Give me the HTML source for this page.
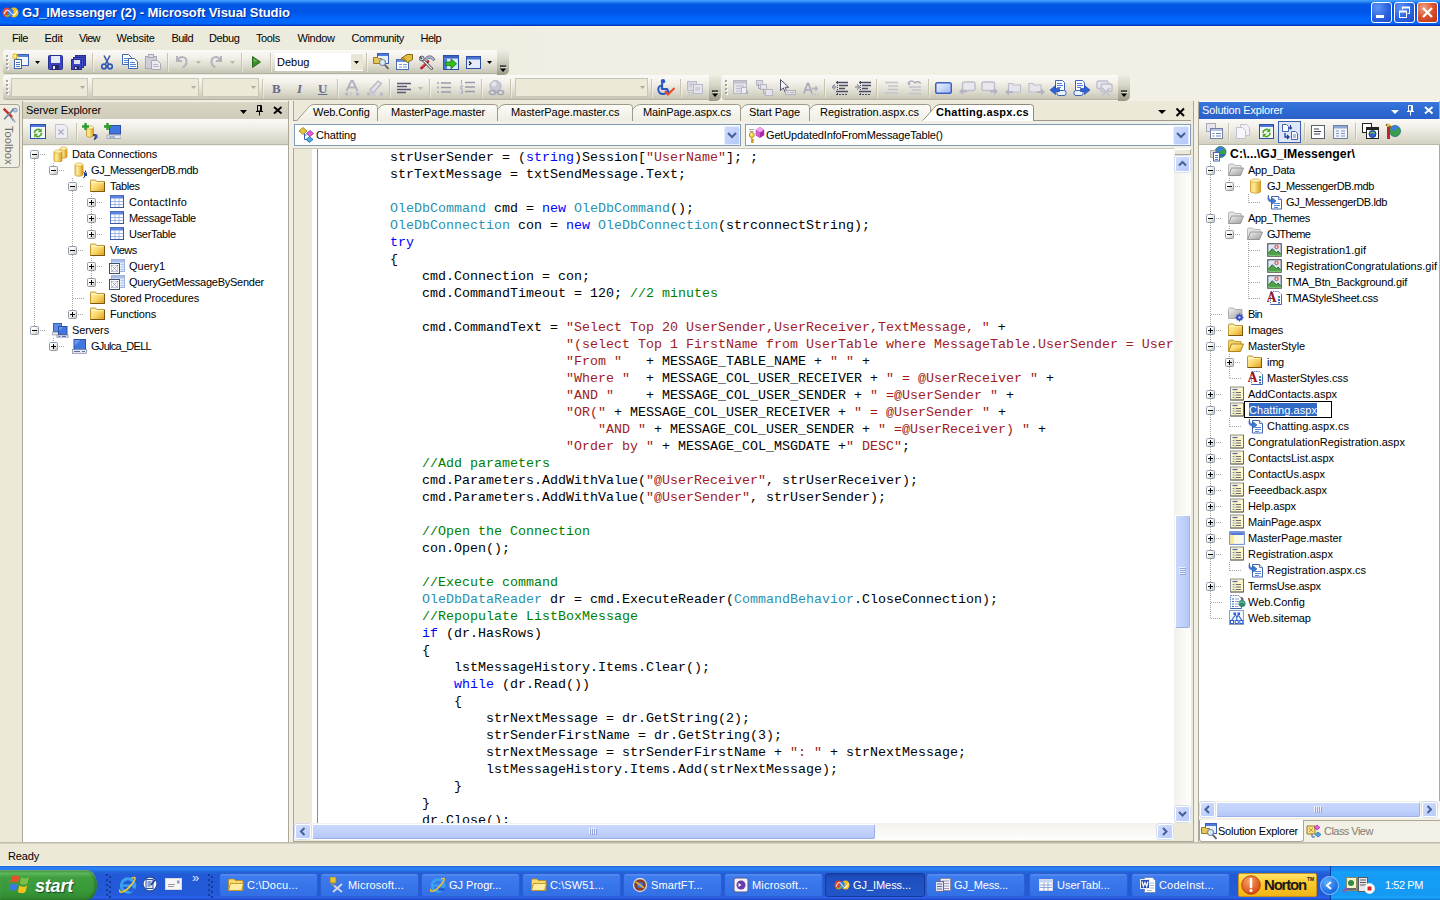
<!DOCTYPE html><html><head><meta charset="utf-8"><title>GJ_IMessenger (2) - Microsoft Visual Studio</title><style>

*{box-sizing:border-box;margin:0;padding:0}
html,body{width:1440px;height:900px;overflow:hidden;background:#ece9d8;font-family:"Liberation Sans",sans-serif;font-size:11px;color:#000}
div,span,svg,i,b{position:absolute;display:block}
.t{white-space:pre;line-height:13px;height:13px}
i,b{font-style:normal;font-weight:normal}
.c{white-space:pre;font-family:"Liberation Mono",monospace;font-size:13.333px;line-height:17px;height:17px}

</style></head><body>
<svg width="0" height="0" style="left:0;top:0"><defs><linearGradient id="tg" x1="0" y1="0" x2="0" y2="1"><stop offset="0" stop-color="#fcfcf8"/><stop offset="1" stop-color="#efede2"/></linearGradient><linearGradient id="cy" x1="0" x2="1"><stop offset="0" stop-color="#f7d66a"/><stop offset=".35" stop-color="#fbe99a"/><stop offset="1" stop-color="#d99b12"/></linearGradient><linearGradient id="fo" x1="0" y1="0" x2="1" y2="1"><stop offset="0" stop-color="#fef4bc"/><stop offset=".5" stop-color="#f8d96c"/><stop offset="1" stop-color="#e29a18"/></linearGradient><linearGradient id="gf" x1="0" y1="0" x2="1" y2="1"><stop offset="0" stop-color="#f4f4f4"/><stop offset="1" stop-color="#9c9c9c"/></linearGradient></defs></svg>
<div id="title" style="left:0;top:0;width:1440px;height:26px;background:linear-gradient(to bottom,#3f9fff 0%,#3a98fc 4%,#1c74ec 10%,#075ae4 16%,#0054e6 24%,#0054e6 46%,#005af0 56%,#0064fa 68%,#0067ff 88%,#0060f4 93%,#0038b8 97%,#002fae 100%)"><svg style="left:2px;top:6px" width="17" height="13" viewBox="0 0 17 13"><ellipse cx="5" cy="6.500" rx="4.500" ry="5" fill="#e8402a"/><ellipse cx="12" cy="6.500" rx="4.500" ry="5" fill="#f5c21a"/><ellipse cx="8.500" cy="6.500" rx="3" ry="4" fill="#3a7be0"/><path d="M2 8c2-5 4-5 6.500-1.500S13 10 15 5" stroke="#fff" stroke-width="1.200" fill="none" opacity=".85"/><path d="M3 9c2 2 3.500 1 5-1" stroke="#7ac143" stroke-width="1.500" fill="none"/></svg><span class="t" style="left:22px;top:5px;font-size:13px;font-weight:bold;color:#fff;line-height:16px;height:16px;letter-spacing:-0.084px;text-shadow:1px 1px 0 #0a2a8a;">GJ_IMessenger (2) - Microsoft Visual Studio</span><div style="left:1371px;top:2px;width:21px;height:21px;border:1px solid #fff;border-radius:3px;background:radial-gradient(circle at 30% 25%,#5e95f5 0%,#2a62e0 55%,#1c4bc4 100%)"></div><div style="left:1394px;top:2px;width:21px;height:21px;border:1px solid #fff;border-radius:3px;background:radial-gradient(circle at 30% 25%,#5e95f5 0%,#2a62e0 55%,#1c4bc4 100%)"></div><div style="left:1417px;top:2px;width:21px;height:21px;border:1px solid #fff;border-radius:3px;background:radial-gradient(circle at 30% 25%,#f0a287 0%,#d9512c 50%,#b83214 100%)"></div><i style="left:1376px;top:15px;width:8px;height:3px;background:#fff"></i><svg style="left:1398px;top:6px" width="13" height="13" viewBox="0 0 13 13"><path d="M4.500 3.500v-2h7v6h-2" fill="none" stroke="#fff" stroke-width="1"/><path d="M4 1.500h8" stroke="#fff" stroke-width="2"/><rect x="1.500" y="5.500" width="7" height="6" fill="none" stroke="#fff"/><path d="M1 5.500h8" stroke="#fff" stroke-width="2"/></svg><svg style="left:1422px;top:7px" width="11" height="11" viewBox="0 0 11 11"><path d="M1 1l9 9M10 1l-9 9" stroke="#fff" stroke-width="2.200"/></svg></div>
<div id="menu" style="left:0;top:26px;width:1440px;height:76px;background:linear-gradient(to right,#e8e6d5 0%,#efede0 25%,#f2f0e5 55%)"><i style="left:0;top:0;width:1440px;height:1px;background:#f7f6f0"></i><span class="t" style="left:12px;top:6px;letter-spacing:-0.431px;">File</span><span class="t" style="left:44.5px;top:6px;letter-spacing:-0.239px;">Edit</span><span class="t" style="left:79px;top:6px;letter-spacing:-0.711px;">View</span><span class="t" style="left:116.5px;top:6px;letter-spacing:-0.176px;">Website</span><span class="t" style="left:171.5px;top:6px;letter-spacing:-0.592px;">Build</span><span class="t" style="left:209px;top:6px;letter-spacing:-0.383px;">Debug</span><span class="t" style="left:256px;top:6px;letter-spacing:-0.380px;">Tools</span><span class="t" style="left:297.5px;top:6px;letter-spacing:-0.354px;">Window</span><span class="t" style="left:351.5px;top:6px;letter-spacing:-0.347px;">Community</span><span class="t" style="left:420.5px;top:6px;letter-spacing:-0.531px;">Help</span></div>
<div style="left:3px;top:50px;width:494px;height:24px;background:linear-gradient(to bottom,#fbfaf7 0%,#f3f1ea 30%,#dedccf 70%,#c6c4b3 100%);border-radius:3px 0 0 3px;border-bottom:1px solid #b3b19f"></div><div style="left:497px;top:50px;width:12px;height:25px;background:linear-gradient(to bottom,#efede4 0%,#d6d4c5 40%,#9b9986 100%);border-radius:0 4px 5px 0"></div><svg style="left:500px;top:65px" width="7" height="8" viewBox="0 0 8 8"><path d="M0 0h7v1.5h-7z M0 3.5h7l-3.5 4z" fill="#000"/><path d="M1 1.5h7v1h-7z" fill="#fff" opacity=".7"/></svg><i style="left:7px;top:56px;width:2px;height:2px;background:#fff"></i><i style="left:6px;top:55px;width:2px;height:2px;background:#a6a398"></i><i style="left:7px;top:60px;width:2px;height:2px;background:#fff"></i><i style="left:6px;top:59px;width:2px;height:2px;background:#a6a398"></i><i style="left:7px;top:64px;width:2px;height:2px;background:#fff"></i><i style="left:6px;top:63px;width:2px;height:2px;background:#a6a398"></i><i style="left:7px;top:68px;width:2px;height:2px;background:#fff"></i><i style="left:6px;top:67px;width:2px;height:2px;background:#a6a398"></i><svg style="left:12px;top:53px" width="17" height="16" viewBox="0 0 17 16"><rect x="4.5" y="1.5" width="12" height="11" fill="#dfe8fb" stroke="#3a5fb0"/><rect x="5" y="2" width="11" height="2" fill="#5d83d8"/><rect x="8" y="4" width="8" height="8" fill="#f4f8ff"/>
<rect x="2.500" y="6.500" width="7" height="9" fill="#fff" stroke="#3d5fa8"/><path transform="translate(0,.5)" d="M4 9h4M4 11h4M4 13h4" stroke="#4a78c8"/><path d="M3 0v6.500M0 3.200h6.500M.8 1l4.600 4.600M5.400 1L.8 5.600" stroke="#f0c010" stroke-width="1.100"/><circle cx="3" cy="3.200" r="1.300" fill="#fff6b0"/></svg><svg style="left:35px;top:61px" width="5" height="3" viewBox="0 0 5 3"><path d="M0 0h5 l-2.5 3 z" fill="#000"/></svg><svg style="left:48px;top:55px" width="15" height="15" viewBox="0 0 15 15"><rect x=".5" y=".5" width="14" height="14" rx="1" fill="#3b44c2" stroke="#27308f"/><rect x="3" y="1" width="9" height="7" fill="#e6ecf7"/><rect x="4" y="10" width="7" height="4.500" fill="#22276e"/><rect x="5" y="11" width="2" height="3" fill="#e8eaf5"/></svg><svg style="left:71px;top:55px" width="15" height="15" viewBox="0 0 15 15"><rect x="4.500" y=".5" width="10" height="10" fill="#3b44c2" stroke="#27308f"/><rect x="2.500" y="2.500" width="10" height="10" fill="#4a53c8" stroke="#27308f"/><rect x=".5" y="4.500" width="10" height="10" fill="#3b44c2" stroke="#27308f"/><rect x="3" y="5" width="6" height="4" fill="#dfe5f5"/><rect x="3" y="11" width="5" height="3.500" fill="#22276e"/><rect x="4" y="12" width="1.500" height="2" fill="#e8eaf5"/></svg><i style="left:92px;top:53px;width:1px;height:18px;background:#c6c3b1"></i><i style="left:93px;top:54px;width:1px;height:18px;background:rgba(255,255,255,.45)"></i><svg style="left:101px;top:55px" width="12" height="15" viewBox="0 0 12 15"><path d="M3 0.500L7.500 9M9 0.500L4.500 9" stroke="#3a57a6" stroke-width="1.600" fill="none"/><circle cx="3" cy="11.500" r="2.300" fill="none" stroke="#2f55b8" stroke-width="1.700"/><circle cx="9" cy="11.500" r="2.300" fill="none" stroke="#2f55b8" stroke-width="1.700"/></svg><svg style="left:122px;top:54px" width="16" height="15" viewBox="0 0 16 15"><path d="M.5.500h6l3 3v7h-9z" fill="#fff" stroke="#3f66b5"/><path transform="translate(0,.5)" d="M2 4h5M2 6h5M2 8h5" stroke="#5585d6"/><path d="M6.500 4.500h6l3 3v7h-9z" fill="#fff" stroke="#3f66b5"/><path transform="translate(0,.5)" d="M8 8h5M8 10h6M8 12h6" stroke="#5585d6"/></svg><svg style="left:145px;top:54px" width="16" height="16" viewBox="0 0 16 16"><rect x=".5" y="2.500" width="11" height="12" fill="#cfcdd6" stroke="#a9a7b4"/><rect x="3.500" y=".5" width="5" height="3" fill="#dddbe6" stroke="#a9a7b4"/><path d="M6.500 6.500h6l3 3v6h-9z" fill="#ecebf2" stroke="#a9a7b4"/><path transform="translate(0,.5)" d="M8 10h5M8 12h6" stroke="#b9b7c6"/></svg><i style="left:167px;top:53px;width:1px;height:18px;background:#c6c3b1"></i><i style="left:168px;top:54px;width:1px;height:18px;background:rgba(255,255,255,.45)"></i><svg style="left:176px;top:55px" width="12" height="13" viewBox="0 0 12 13"><path d="M1 1v5h5" fill="none" stroke="#b4b3bd" stroke-width="2"/><path d="M2 5c2-4 8-4 8.500 1c.3 3-2 5.500-4 6.500" fill="none" stroke="#b4b3bd" stroke-width="2"/></svg><svg style="left:196px;top:61px" width="5" height="3" viewBox="0 0 5 3"><path d="M0 0h5 l-2.5 3 z" fill="#b9b7a8"/></svg><svg style="left:210px;top:55px" width="12" height="13" viewBox="0 0 12 13"><path d="M11 1v5h-5" fill="none" stroke="#b4b3bd" stroke-width="2"/><path d="M10 5c-2-4-8-4-8.500 1c-.3 3 2 5.500 4 6.500" fill="none" stroke="#b4b3bd" stroke-width="2"/></svg><svg style="left:230px;top:61px" width="5" height="3" viewBox="0 0 5 3"><path d="M0 0h5 l-2.5 3 z" fill="#b9b7a8"/></svg><i style="left:241px;top:53px;width:1px;height:18px;background:#c6c3b1"></i><i style="left:242px;top:54px;width:1px;height:18px;background:rgba(255,255,255,.45)"></i><svg style="left:252px;top:56px" width="9" height="12" viewBox="0 0 9 12"><path d="M.5.500v11l8-5.500z" fill="#3b8f2b" stroke="#2a6a1d"/><path d="M1.500 2.500v3.500l4-1z" fill="#7cc46a" opacity=".7"/></svg><i style="left:270px;top:53px;width:1px;height:18px;background:#c6c3b1"></i><i style="left:271px;top:54px;width:1px;height:18px;background:rgba(255,255,255,.45)"></i><div style="left:275px;top:53px;width:88px;height:18px;background:#fff"></div><div style="left:351px;top:54px;width:12px;height:16px;background:#e9e6d6"></div><svg style="left:354px;top:61px" width="5" height="3" viewBox="0 0 5 3"><path d="M0 0h5 l-2.5 3 z" fill="#000"/></svg><span class="t" style="left:277px;top:56px;">Debug</span><i style="left:366px;top:53px;width:1px;height:18px;background:#c6c3b1"></i><i style="left:367px;top:54px;width:1px;height:18px;background:rgba(255,255,255,.45)"></i><svg style="left:373px;top:53px" width="17" height="17" viewBox="0 0 17 17"><rect x="4.500" y=".5" width="11" height="10" fill="#e9f0fc" stroke="#3a5fb0"/><rect x="5" y="1" width="10" height="2" fill="#4f79d6"/><path d="M0.500 4.500h4l1 1h3v5h-8z" fill="#e4c65a" stroke="#9a7d1e"/><circle cx="9.500" cy="9.500" r="3" fill="#d9ecf8" stroke="#7d8aa0" stroke-width="1.200"/><path d="M11.800 11.800l3.700 4" stroke="#5b5e6c" stroke-width="1.800"/></svg><svg style="left:396px;top:54px" width="17" height="16" viewBox="0 0 17 16"><rect x=".5" y="5.500" width="12" height="10" fill="#fff" stroke="#4b6cb5"/><rect x="1" y="6" width="11" height="2" fill="#6a8fe0"/><path d="M3 10.500h3M7 10.500h4M3 13h3M7 13h4" stroke="#7f96c6" stroke-width="1.200"/><path d="M5 4.500l6-4h5.500v5l-5 3z" fill="#e0bf3c" stroke="#84691a"/><path d="M6.500 3l4 4" stroke="#84691a"/></svg><svg style="left:419px;top:54px" width="17" height="16" viewBox="0 0 17 16"><path d="M6 4.500c2-3.500 7.500-4 10 1l-1.800 1.200c-1.500-2.500-4.500-3-6.500-.8z" fill="#aab2cc" stroke="#5f6784" stroke-width=".8"/><path d="M9 7.500L2.500 14" stroke="#b8202e" stroke-width="2.800" stroke-linecap="round"/><path d="M8 7.500L2.500 13" stroke="#ee8a92" stroke-width=".9"/><path d="M3 5l9.500 9.500" stroke="#3c3c44" stroke-width="2.800" stroke-linecap="round"/><path d="M3 5l9.500 9.500" stroke="#f2f2f6" stroke-width="1.200" stroke-linecap="round"/><circle cx="2.800" cy="4.500" r="2.400" fill="#d4d8e4" stroke="#4a4a55" stroke-width=".9"/><path d="M1 3l2 2" stroke="#4a4a55" stroke-width="1.200"/></svg><svg style="left:443px;top:55px" width="16" height="15" viewBox="0 0 16 15"><rect x=".5" y=".5" width="15" height="14" fill="#d8e5fb" stroke="#2c4ea3"/><rect x="1" y="1" width="14" height="2.500" fill="#3a63c4"/><rect x="1" y="3.500" width="3" height="10.500" fill="#4f7ad2"/><path d="M2.500 7h5.500v-3.200l5.500 5-5.500 5v-3.200h-5.500z" fill="#2fc21b" stroke="#14730a" stroke-width=".8"/></svg><svg style="left:466px;top:56px" width="15" height="13" viewBox="0 0 15 13"><rect x=".5" y=".5" width="14" height="12" fill="#e4ecfb" stroke="#2c4ea3"/><rect x="1" y="1" width="13" height="2.500" fill="#4a74d4"/><path d="M3 5.500l2 1.800-2 1.800" stroke="#000" stroke-width="1.200" fill="none"/></svg><svg style="left:487px;top:61px" width="5" height="3" viewBox="0 0 5 3"><path d="M0 0h5 l-2.5 3 z" fill="#000"/></svg><div style="left:3px;top:75px;width:706px;height:25px;background:linear-gradient(to bottom,#fbfaf7 0%,#f3f1ea 30%,#dedccf 70%,#c6c4b3 100%);border-radius:3px 0 0 3px;border-bottom:1px solid #b3b19f"></div><div style="left:709px;top:75px;width:12px;height:26px;background:linear-gradient(to bottom,#efede4 0%,#d6d4c5 40%,#9b9986 100%);border-radius:0 4px 5px 0"></div><svg style="left:712px;top:90px" width="7" height="8" viewBox="0 0 8 8"><path d="M0 0h7v1.5h-7z M0 3.5h7l-3.5 4z" fill="#000"/><path d="M1 1.5h7v1h-7z" fill="#fff" opacity=".7"/></svg><i style="left:7px;top:81px;width:2px;height:2px;background:#fff"></i><i style="left:6px;top:80px;width:2px;height:2px;background:#a6a398"></i><i style="left:7px;top:85px;width:2px;height:2px;background:#fff"></i><i style="left:6px;top:84px;width:2px;height:2px;background:#a6a398"></i><i style="left:7px;top:89px;width:2px;height:2px;background:#fff"></i><i style="left:6px;top:88px;width:2px;height:2px;background:#a6a398"></i><i style="left:7px;top:93px;width:2px;height:2px;background:#fff"></i><i style="left:6px;top:92px;width:2px;height:2px;background:#a6a398"></i><div style="left:11px;top:78px;width:77px;height:19px;background:#ece9d8;border:1px solid #c9c6b3"></div><svg style="left:80px;top:86px" width="5" height="3" viewBox="0 0 5 3"><path d="M0 0h5 l-2.5 3 z" fill="#b0ae9f"/></svg><div style="left:92px;top:78px;width:107px;height:19px;background:#ece9d8;border:1px solid #c9c6b3"></div><svg style="left:191px;top:86px" width="5" height="3" viewBox="0 0 5 3"><path d="M0 0h5 l-2.5 3 z" fill="#b0ae9f"/></svg><div style="left:202px;top:78px;width:57px;height:19px;background:#ece9d8;border:1px solid #c9c6b3"></div><svg style="left:251px;top:86px" width="5" height="3" viewBox="0 0 5 3"><path d="M0 0h5 l-2.5 3 z" fill="#b0ae9f"/></svg><i style="left:262px;top:79px;width:1px;height:18px;background:#c6c3b1"></i><i style="left:263px;top:80px;width:1px;height:18px;background:rgba(255,255,255,.45)"></i><span class="t" style="left:272px;top:81px;font-size:13px;font-weight:bold;color:#6a6a8c;line-height:16px;height:16px;font-family:'Liberation Serif',serif;">B</span><span class="t" style="left:297px;top:81px;font-size:13px;font-weight:bold;font-style:italic;color:#6a6a8c;line-height:16px;height:16px;font-family:'Liberation Serif',serif;">I</span><span class="t" style="left:318px;top:81px;font-size:13px;font-weight:bold;color:#6a6a8c;line-height:16px;height:16px;font-family:'Liberation Serif',serif;text-decoration:underline;">U</span><i style="left:337px;top:79px;width:1px;height:18px;background:#c6c3b1"></i><i style="left:338px;top:80px;width:1px;height:18px;background:rgba(255,255,255,.45)"></i><svg style="left:344px;top:80px" width="16" height="16" viewBox="0 0 16 16"><path d="M2.500 11L7.500 0.500h1L13.500 11M5 7.500h6" stroke="#b3b2c0" stroke-width="2" fill="none"/><rect x="1" y="12.500" width="3" height="3" fill="#b9b8c6"/><rect x="5" y="12.500" width="3" height="3" fill="#c9c8d4"/><rect x="9" y="12.500" width="2" height="3" fill="#d6d5de"/><rect x="12" y="12.500" width="3" height="3" fill="#b9b8c6"/></svg><svg style="left:367px;top:80px" width="16" height="16" viewBox="0 0 16 16"><path d="M3 10L11 1l3.500 2.500L6.500 12.500z" fill="#e3e2ea" stroke="#b7b6c4" stroke-width="1.200"/><path d="M3 10l-1 3 4-.5z" fill="#c9c8d4"/><rect x="0" y="12.500" width="3" height="3" fill="#b9b8c6"/><rect x="4" y="12.500" width="4" height="3" fill="#c9c8d4"/><rect x="9" y="12.500" width="2" height="3" fill="#dad9e2"/><rect x="13" y="12.500" width="3" height="3" fill="#b9b8c6"/></svg><i style="left:389px;top:79px;width:1px;height:18px;background:#c6c3b1"></i><i style="left:390px;top:80px;width:1px;height:18px;background:rgba(255,255,255,.45)"></i><svg style="left:397px;top:82px" width="15" height="12" viewBox="0 0 15 12"><path transform="translate(0,.5)" d="M0 1h14M0 4h10M0 7h14M0 10h9" stroke="#5a5a78" stroke-width="1.300"/></svg><svg style="left:418px;top:87px" width="5" height="3" viewBox="0 0 5 3"><path d="M0 0h5 l-2.5 3 z" fill="#b9b7a8"/></svg><i style="left:429px;top:79px;width:1px;height:18px;background:#c6c3b1"></i><i style="left:430px;top:80px;width:1px;height:18px;background:rgba(255,255,255,.45)"></i><svg style="left:437px;top:81px" width="14" height="13" viewBox="0 0 14 13"><path d="M4 2h10M4 6.500h10M4 11h10" stroke="#9a99a8" stroke-width="1.300"/><rect x="0" y="1" width="2" height="2" fill="#b5b4c2"/><rect x="0" y="5.500" width="2" height="2" fill="#b5b4c2"/><rect x="0" y="10" width="2" height="2" fill="#b5b4c2"/></svg><svg style="left:460px;top:80px" width="15" height="14" viewBox="0 0 15 14"><path d="M5 2.500h10M5 7h10M5 11.500h10" stroke="#9a99a8" stroke-width="1.300"/><path d="M1.500 0v4M.5 5.500h2v1.500h-2v1.500h2M.5 10h2v4h-2M.5 12h2" stroke="#b0afc0" stroke-width="1" fill="none"/></svg><i style="left:481px;top:79px;width:1px;height:18px;background:#c6c3b1"></i><i style="left:482px;top:80px;width:1px;height:18px;background:rgba(255,255,255,.45)"></i><svg style="left:488px;top:80px" width="17" height="16" viewBox="0 0 17 16"><circle cx="7.500" cy="6" r="5.500" fill="#c9c9d6" stroke="#b3b3c2"/><circle cx="6" cy="4" r="2.500" fill="#e4e4ec"/><rect x="1.500" y="10.500" width="6" height="4" rx="2" fill="none" stroke="#a9a8ba" stroke-width="1.600"/><rect x="9.500" y="10.500" width="6" height="4" rx="2" fill="none" stroke="#a9a8ba" stroke-width="1.600"/><path d="M6 12.500h5" stroke="#a9a8ba" stroke-width="1.600"/></svg><i style="left:510px;top:79px;width:1px;height:18px;background:#c6c3b1"></i><i style="left:511px;top:80px;width:1px;height:18px;background:rgba(255,255,255,.45)"></i><div style="left:515px;top:78px;width:133px;height:19px;background:#ece9d8;border:1px solid #c9c6b3"></div><svg style="left:640px;top:86px" width="5" height="3" viewBox="0 0 5 3"><path d="M0 0h5 l-2.5 3 z" fill="#b0ae9f"/></svg><i style="left:651px;top:79px;width:1px;height:18px;background:#c6c3b1"></i><i style="left:652px;top:80px;width:1px;height:18px;background:rgba(255,255,255,.45)"></i><svg style="left:657px;top:79px" width="18" height="17" viewBox="0 0 18 17"><circle cx="6" cy="2.300" r="2.200" fill="#2a55c7"/><path d="M5 5v5h5l2 4" stroke="#2a55c7" stroke-width="2.200" fill="none" stroke-linecap="round" stroke-linejoin="round"/><path d="M4 6.500c-4.500 2-3 8.500 2 8.500c2.500 0 4-1.500 4.500-3" stroke="#2a55c7" stroke-width="1.900" fill="none"/><path d="M8 12l3 3.500L17.500 9" stroke="#ea4a22" stroke-width="2" fill="none"/></svg><i style="left:680px;top:79px;width:1px;height:18px;background:#c6c3b1"></i><i style="left:681px;top:80px;width:1px;height:18px;background:rgba(255,255,255,.45)"></i><svg style="left:687px;top:80px" width="16" height="16" viewBox="0 0 16 16"><rect x=".5" y="1.500" width="9" height="9" fill="#dcdbe4" stroke="#bbbac8"/><rect x="6.500" y="4.500" width="9" height="9" fill="#e6e5ec" stroke="#bbbac8"/><path d="M2 4h5M2 6h3M1 12.500h2M4 12.500h2M1 15h2M4 15h2M8 8h5M8 10h5" stroke="#bdbccb" stroke-width="1.200"/></svg><div style="left:722px;top:75px;width:396px;height:25px;background:linear-gradient(to bottom,#fbfaf7 0%,#f3f1ea 30%,#dedccf 70%,#c6c4b3 100%);border-radius:3px 0 0 3px;border-bottom:1px solid #b3b19f"></div><div style="left:1118px;top:75px;width:12px;height:26px;background:linear-gradient(to bottom,#efede4 0%,#d6d4c5 40%,#9b9986 100%);border-radius:0 4px 5px 0"></div><svg style="left:1121px;top:90px" width="7" height="8" viewBox="0 0 8 8"><path d="M0 0h7v1.5h-7z M0 3.5h7l-3.5 4z" fill="#000"/><path d="M1 1.5h7v1h-7z" fill="#fff" opacity=".7"/></svg><i style="left:726px;top:81px;width:2px;height:2px;background:#fff"></i><i style="left:725px;top:80px;width:2px;height:2px;background:#a6a398"></i><i style="left:726px;top:85px;width:2px;height:2px;background:#fff"></i><i style="left:725px;top:84px;width:2px;height:2px;background:#a6a398"></i><i style="left:726px;top:89px;width:2px;height:2px;background:#fff"></i><i style="left:725px;top:88px;width:2px;height:2px;background:#a6a398"></i><i style="left:726px;top:93px;width:2px;height:2px;background:#fff"></i><i style="left:725px;top:92px;width:2px;height:2px;background:#a6a398"></i><svg style="left:733px;top:80px" width="16" height="16" viewBox="0 0 16 16"><rect x=".5" y=".5" width="13" height="13" fill="#e4e3ea" stroke="#b7b6c4"/><rect x="1" y="1" width="12" height="2.500" fill="#c4c3d0"/><path d="M3 6h8M3 8.500h5M3 11h5" stroke="#bdbccb" stroke-width="1.200"/><rect x="8.500" y="7.500" width="5" height="6" fill="#efeef4" stroke="#b7b6c4"/><path d="M12 13l3-3v4.500z" fill="#b0afbf"/></svg><svg style="left:756px;top:80px" width="17" height="16" viewBox="0 0 17 16"><rect x=".5" y=".5" width="6" height="5" fill="#dcdbe4" stroke="#b7b6c4"/><rect x="4.500" y="4.500" width="6" height="5" fill="#e6e5ec" stroke="#b7b6c4"/><rect x="9.500" y="9.500" width="7" height="6" fill="#e6e5ec" stroke="#b7b6c4"/><path transform="translate(.5,.5)" d="M2 3v5h2M7 8v5h2" stroke="#a9a8b8" fill="none"/></svg><svg style="left:779px;top:79px" width="17" height="16" viewBox="0 0 17 16"><path d="M1.500 0.500v11l2.800-2.600 2 4.600 1.800-.8-2-4.400h3.600z" fill="#f4f4f8" stroke="#55556a" stroke-width="1"/><rect x="6.500" y="11.500" width="10" height="4" fill="#e6e5ec" stroke="#b0afc0"/><path d="M8 13.500h2M11 13.500h4" stroke="#b0afc0"/></svg><svg style="left:803px;top:82px" width="15" height="13" viewBox="0 0 15 13"><path d="M.8 11.500L4.500 1.500h1L9 11.500M2.300 8h5.400" stroke="#a9a8b8" stroke-width="1.700" fill="none"/><path d="M9 5.500h3.500v-2.500l2.500 3.500-2.500 3.500v-2.500h-3.500z" fill="#b3b2c2"/><path d="M9 12.500h6" stroke="#b3b2c2" stroke-dasharray="1.500 1"/></svg><i style="left:824px;top:79px;width:1px;height:18px;background:#c6c3b1"></i><i style="left:825px;top:80px;width:1px;height:18px;background:rgba(255,255,255,.45)"></i><svg style="left:832px;top:81px" width="16" height="14" viewBox="0 0 16 14"><path d="M4 1.500h12M7 4.500h9M7 7.500h6M4 10.500h12" stroke="#4c4c68" stroke-width="1.600"/><path d="M5.500 0v14" stroke="#4c4c68" stroke-dasharray="1 1"/><path d="M4.500 6L0 6l0 0M3 3.500L.3 6 3 8.500" stroke="#9a99ae" stroke-width="1.400" fill="none"/><path transform="translate(0,.5)" d="M4 13h12" stroke="#4c4c68" stroke-width="1" stroke-dasharray="2 1"/></svg><svg style="left:855px;top:81px" width="16" height="14" viewBox="0 0 16 14"><path d="M4 1.500h12M7 4.500h9M7 7.500h6M4 10.500h12" stroke="#4c4c68" stroke-width="1.600"/><path d="M5.500 0v14" stroke="#4c4c68" stroke-dasharray="1 1"/><path d="M0 6h4.500M2 3.500L4.700 6 2 8.500" stroke="#9a99ae" stroke-width="1.400" fill="none"/><path transform="translate(0,.5)" d="M4 13h12" stroke="#4c4c68" stroke-width="1" stroke-dasharray="2 1"/></svg><i style="left:876px;top:79px;width:1px;height:18px;background:#c6c3b1"></i><i style="left:877px;top:80px;width:1px;height:18px;background:rgba(255,255,255,.45)"></i><svg style="left:884px;top:81px" width="15" height="14" viewBox="0 0 15 14"><path d="M1 1.500h13M4 5h10M4 8.500h10M1 12h13" stroke="#c3c2cf" stroke-width="1.300"/></svg><svg style="left:907px;top:80px" width="15" height="15" viewBox="0 0 15 15"><path d="M1.500 3.500c0-3 5-3 6.500-.5c2-2 6-1.500 5 1" stroke="#a9a8b8" stroke-width="1.300" fill="none"/><path d="M0 3l2 2.500 2-2z" fill="#a9a8b8"/><path d="M2 7h12M5 10h9M2 13.500h12" stroke="#c3c2cf" stroke-width="1.300"/></svg><i style="left:928px;top:79px;width:1px;height:18px;background:#c6c3b1"></i><i style="left:929px;top:80px;width:1px;height:18px;background:rgba(255,255,255,.45)"></i><svg style="left:935px;top:82px" width="17" height="12" viewBox="0 0 17 12"><rect x=".75" y=".75" width="15.500" height="10.500" rx="1.800" fill="url(#bmg)" stroke="#3d62c4" stroke-width="1.500"/><defs><linearGradient id="bmg" x1="0" y1="0" x2="1" y2="1"><stop offset="0" stop-color="#f1f5ff"/><stop offset="1" stop-color="#9db7f3"/></linearGradient></defs></svg><svg style="left:959px;top:81px" width="17" height="15" viewBox="0 0 17 15"><rect x="3.500" y="1" width="12.500" height="8.500" rx="1.500" fill="#e9e8ef" stroke="#bebdca" stroke-width="1.400"/><path d="M0 10.500l4-3.500v2.500h4v2h-4v2.500z" fill="#b3b2c2"/></svg><svg style="left:981px;top:81px" width="17" height="15" viewBox="0 0 17 15"><rect x="1" y="1" width="12.500" height="8.500" rx="1.500" fill="#e9e8ef" stroke="#bebdca" stroke-width="1.400"/><path d="M17 10.500l-4-3.500v2.500h-4v2h4v2.500z" fill="#b3b2c2"/></svg><svg style="left:1005px;top:81px" width="17" height="15" viewBox="0 0 17 15"><path d="M3.500 2.500h4l1 1.500h7v7h-12z" fill="#e6e5ec" stroke="#bebdca" stroke-width="1.200"/><path d="M0 11l4-3.500v2.500h4v2h-4v2.500z" fill="#b3b2c2"/></svg><svg style="left:1028px;top:81px" width="17" height="15" viewBox="0 0 17 15"><path d="M1 2.500h4l1 1.500h7v7h-12z" fill="#e6e5ec" stroke="#bebdca" stroke-width="1.200"/><path d="M17 11l-4-3.500v2.500h-4v2h4v2.500z" fill="#b3b2c2"/></svg><svg style="left:1050px;top:80px" width="17" height="16" viewBox="0 0 17 16"><path d="M5.500.5h7l2 2v8h-9z" fill="#fff" stroke="#3f66b5"/><path d="M7 3.500h5M7 5.500h6M7 7.500h4" stroke="#5585d6"/><rect x="7" y="10.500" width="9" height="5" rx="2" fill="#e9f0ff" stroke="#3f66b5"/><path d="M0 10l5.500-4.500v3h4v3h-4v3z" fill="#2f62d8" stroke="#1d3f9a" stroke-width=".6"/></svg><svg style="left:1073px;top:80px" width="17" height="16" viewBox="0 0 17 16"><path d="M2.500.5h7l2 2v8h-9z" fill="#fff" stroke="#3f66b5"/><path d="M4 3.500h5M4 5.500h6M4 7.500h4" stroke="#5585d6"/><rect x="1" y="10.500" width="9" height="5" rx="2" fill="#e9f0ff" stroke="#3f66b5"/><path d="M17 10l-5.500-4.500v3h-4v3h4v3z" fill="#2f62d8" stroke="#1d3f9a" stroke-width=".6"/></svg><svg style="left:1096px;top:80px" width="17" height="16" viewBox="0 0 17 16"><rect x="1" y="1" width="11" height="7.500" rx="1.500" fill="#e9e8ef" stroke="#bebdca" stroke-width="1.400"/><rect x="5" y="4" width="11" height="7.500" rx="1.500" fill="#e9e8ef" stroke="#bebdca" stroke-width="1.400"/><path d="M6 8l8 8M14 8l-8 8" stroke="#c3c2cf" stroke-width="1.800"/></svg>
<div style="left:0;top:102px;width:22px;height:742px;background:#ece9d8"></div><div style="left:-1px;top:104px;width:21px;height:64px;background:#f0eee4;border:1px solid #a8a594;border-radius:0 3px 3px 0"></div><svg style="left:2px;top:107px" width="16" height="17" viewBox="0 0 15 16"><path d="M1.500 1.500l8 8" stroke="#c8302a" stroke-width="2.400"/><path d="M8 9l3 4" stroke="#777" stroke-width="1.600"/><path d="M13 2c-1.500-.5-3 0-3.500 1.500l-7.500 8" stroke="#6d7f99" stroke-width="1.600" fill="none"/><circle cx="12.500" cy="3" r="1.800" fill="#b8cdea" stroke="#7d93b8" stroke-width=".8"/><path d="M9 10l3.500 4.500" stroke="#9aa6bc" stroke-width="1.300"/></svg><span class="t" style="left:2px;top:126px;width:13px;height:40px;writing-mode:vertical-rl;line-height:13px;color:#6f6f66;letter-spacing:0.1px">Toolbox</span><div style="left:22px;top:101px;width:267px;height:742px;background:#f4f2e8;border:1px solid #aca899;border-top:0"></div><div style="left:23px;top:146px;width:265px;height:696px;background:#fff"></div><div style="left:23px;top:102px;width:265px;height:17px;background:linear-gradient(to bottom,#dad6c6,#d0ccbb)"></div><span class="t" style="left:26px;top:104px;letter-spacing:-0.094px;">Server Explorer</span><svg style="left:240px;top:110px" width="7" height="4" viewBox="0 0 7 4"><path d="M0 0h7 l-3.5 4 z" fill="#000"/></svg><svg style="left:255px;top:105px" width="9" height="12" viewBox="0 0 9 12"><path d="M2.500 .5h4v5.500h-4z M5.500 .5v5.500 M1 6.500h7 M4.500 7v3.500" stroke="#000" fill="none"/></svg><svg style="left:273px;top:106px" width="10" height="9" viewBox="0 0 10 9"><path d="M1 1l7.500 6.500M8.500 1l-7.500 6.500" stroke="#000" stroke-width="1.900"/></svg><div style="left:23px;top:119px;width:265px;height:26px;background:linear-gradient(to bottom,#fbfaf7 0%,#efede4 40%,#d3d1c1 100%);border-bottom:1px solid #bab8a8"></div><svg style="left:30px;top:124px" width="16" height="15" viewBox="0 0 16 15"><rect x=".5" y=".5" width="15" height="14" fill="#f4f8ff" stroke="#2c4ea3"/><rect x="1" y="1" width="14" height="2" fill="#4f79d6"/><path d="M4.500 9a3.500 3.500 0 0 1 6-2.500" stroke="#55a81e" stroke-width="1.700" fill="none"/><path d="M11.800 4.200v4h-4z" fill="#55a81e"/><path d="M11.500 9a3.500 3.500 0 0 1-6 2.500" stroke="#55a81e" stroke-width="1.700" fill="none"/><path d="M4.200 13.800v-4h4z" fill="#55a81e"/></svg><svg style="left:55px;top:124px" width="13" height="15" viewBox="0 0 13 15"><path d="M.5.500h9l3 3v11h-12z" fill="#eeedf4" stroke="#c3c2d0"/><path d="M3.500 5.500l5 5M8.500 5.500l-5 5" stroke="#b0afc6" stroke-width="1.500"/></svg><i style="left:76px;top:123px;width:1px;height:17px;background:#c6c3b1"></i><i style="left:77px;top:124px;width:1px;height:17px;background:rgba(255,255,255,.45)"></i><svg style="left:82px;top:123px" width="17" height="17" viewBox="0 0 17 17"><path d="M4.5 4.5v8c0 2.200 7 2.200 7 0v-8z" fill="url(#cy)" stroke="#c48a10" stroke-width=".7"/><ellipse cx="8" cy="4.5" rx="3.5" ry="1.600" fill="#fdf2b8" stroke="#d7a32a" stroke-width=".6"/><path d="M3.500 0v7M0 3.500h7" stroke="#2e9a2e" stroke-width="2.400"/><path d="M11 12l3 0l0 3-2 1.500" stroke="#222" stroke-width="1.300" fill="none"/><rect x="12.500" y="12" width="3" height="3" fill="#3550c8"/></svg><svg style="left:104px;top:123px" width="17" height="17" viewBox="0 0 17 17"><rect x="5.500" y="2.500" width="11" height="8.500" fill="#3f77de" stroke="#2c4ea3"/><rect x="3" y="12" width="14" height="3.500" fill="#e6e9ef" stroke="#8a94a8" stroke-width=".7"/><path d="M5 14h6" stroke="#6b7fb0"/><path d="M3.500 0v7M0 3.500h7" stroke="#2e9a2e" stroke-width="2.400"/></svg><i style="left:40px;top:154px;width:6px;height:1px;background:repeating-linear-gradient(to right,#a8a8a0 0 1px,transparent 1px 2px)"></i><i style="left:30px;top:150px;width:9px;height:9px;border:1px solid #8f9bab;border-radius:1.500px;background:linear-gradient(135deg,#fff 30%,#c9c7ba 100%)"></i><i style="left:32px;top:154px;width:5px;height:1px;background:#000"></i><svg style="left:53px;top:146px" width="16" height="16" viewBox="0 0 16 16"><path d="M7 2.5v8c0 2.200 7 2.200 7 0v-8z" fill="url(#cy)" stroke="#c48a10" stroke-width=".7"/><ellipse cx="10.5" cy="2.5" rx="3.5" ry="1.600" fill="#fdf2b8" stroke="#d7a32a" stroke-width=".6"/><path d="M1 5.5v9c0 2.200 8 2.200 8 0v-9z" fill="url(#cy)" stroke="#c48a10" stroke-width=".7"/><ellipse cx="5" cy="5.5" rx="4" ry="1.600" fill="#fdf2b8" stroke="#d7a32a" stroke-width=".6"/></svg><span class="t" style="left:72px;top:148px;letter-spacing:-0.153px;">Data Connections</span><i style="left:59px;top:170px;width:6px;height:1px;background:repeating-linear-gradient(to right,#a8a8a0 0 1px,transparent 1px 2px)"></i><i style="left:49px;top:166px;width:9px;height:9px;border:1px solid #8f9bab;border-radius:1.500px;background:linear-gradient(135deg,#fff 30%,#c9c7ba 100%)"></i><i style="left:51px;top:170px;width:5px;height:1px;background:#000"></i><svg style="left:73px;top:162px" width="16" height="16" viewBox="0 0 16 16"><path d="M2 2.5v10c0 2.200 8 2.200 8 0v-10z" fill="url(#cy)" stroke="#c48a10" stroke-width=".7"/><ellipse cx="6" cy="2.5" rx="4" ry="1.600" fill="#fdf2b8" stroke="#d7a32a" stroke-width=".6"/><path d="M10 9.500l1.500 1.500" stroke="#555" stroke-width="1"/><rect x="11" y="10.500" width="3" height="3.500" fill="#2a3f9a"/><path d="M12.500 10v-1.500M12 14l-1.500 2" stroke="#222" stroke-width="1"/></svg><span class="t" style="left:91px;top:164px;letter-spacing:-0.407px;">GJ_MessengerDB.mdb</span><i style="left:78px;top:186px;width:6px;height:1px;background:repeating-linear-gradient(to right,#a8a8a0 0 1px,transparent 1px 2px)"></i><i style="left:68px;top:182px;width:9px;height:9px;border:1px solid #8f9bab;border-radius:1.500px;background:linear-gradient(135deg,#fff 30%,#c9c7ba 100%)"></i><i style="left:70px;top:186px;width:5px;height:1px;background:#000"></i><svg style="left:90px;top:178px" width="16" height="16" viewBox="0 0 16 16"><path d="M.5 13.500v-10.500q0-1 1-1h4l1.500 1.500h7.500v10z" fill="url(#fo)" stroke="#b58a22" stroke-width=".9"/><path d="M.5 13.500h14.500M14.500 4v9.500" stroke="#7a5a10" stroke-width="1" fill="none"/><path d="M1.500 4.500h12" stroke="#fff6c8" stroke-width="1" opacity=".8"/></svg><span class="t" style="left:110px;top:180px;letter-spacing:-0.336px;">Tables</span><i style="left:97px;top:202px;width:6px;height:1px;background:repeating-linear-gradient(to right,#a8a8a0 0 1px,transparent 1px 2px)"></i><i style="left:87px;top:198px;width:9px;height:9px;border:1px solid #8f9bab;border-radius:1.500px;background:linear-gradient(135deg,#fff 30%,#c9c7ba 100%)"></i><i style="left:89px;top:202px;width:5px;height:1px;background:#000"></i><i style="left:91px;top:200px;width:1px;height:5px;background:#000"></i><svg style="left:110px;top:194px" width="16" height="16" viewBox="0 0 16 16"><rect x=".5" y="1.500" width="13" height="12" fill="#fff" stroke="#4b6fc0"/><rect x="1" y="2" width="12" height="2.500" fill="#5d84d8"/><path d="M1 7.500h12M1 10.500h12M5 4.500v9M9 4.500v9" stroke="#9fb6e6"/><path d="M1 13.500h13M13.500 2v12" stroke="#3b57a0" stroke-width="1"/></svg><span class="t" style="left:129px;top:196px;letter-spacing:0.158px;">ContactInfo</span><i style="left:97px;top:218px;width:6px;height:1px;background:repeating-linear-gradient(to right,#a8a8a0 0 1px,transparent 1px 2px)"></i><i style="left:87px;top:214px;width:9px;height:9px;border:1px solid #8f9bab;border-radius:1.500px;background:linear-gradient(135deg,#fff 30%,#c9c7ba 100%)"></i><i style="left:89px;top:218px;width:5px;height:1px;background:#000"></i><i style="left:91px;top:216px;width:1px;height:5px;background:#000"></i><svg style="left:110px;top:210px" width="16" height="16" viewBox="0 0 16 16"><rect x=".5" y="1.500" width="13" height="12" fill="#fff" stroke="#4b6fc0"/><rect x="1" y="2" width="12" height="2.500" fill="#5d84d8"/><path d="M1 7.500h12M1 10.500h12M5 4.500v9M9 4.500v9" stroke="#9fb6e6"/><path d="M1 13.500h13M13.500 2v12" stroke="#3b57a0" stroke-width="1"/></svg><span class="t" style="left:129px;top:212px;letter-spacing:-0.346px;">MessageTable</span><i style="left:97px;top:234px;width:6px;height:1px;background:repeating-linear-gradient(to right,#a8a8a0 0 1px,transparent 1px 2px)"></i><i style="left:87px;top:230px;width:9px;height:9px;border:1px solid #8f9bab;border-radius:1.500px;background:linear-gradient(135deg,#fff 30%,#c9c7ba 100%)"></i><i style="left:89px;top:234px;width:5px;height:1px;background:#000"></i><i style="left:91px;top:232px;width:1px;height:5px;background:#000"></i><svg style="left:110px;top:226px" width="16" height="16" viewBox="0 0 16 16"><rect x=".5" y="1.500" width="13" height="12" fill="#fff" stroke="#4b6fc0"/><rect x="1" y="2" width="12" height="2.500" fill="#5d84d8"/><path d="M1 7.500h12M1 10.500h12M5 4.500v9M9 4.500v9" stroke="#9fb6e6"/><path d="M1 13.500h13M13.500 2v12" stroke="#3b57a0" stroke-width="1"/></svg><span class="t" style="left:129px;top:228px;letter-spacing:-0.305px;">UserTable</span><i style="left:78px;top:250px;width:6px;height:1px;background:repeating-linear-gradient(to right,#a8a8a0 0 1px,transparent 1px 2px)"></i><i style="left:68px;top:246px;width:9px;height:9px;border:1px solid #8f9bab;border-radius:1.500px;background:linear-gradient(135deg,#fff 30%,#c9c7ba 100%)"></i><i style="left:70px;top:250px;width:5px;height:1px;background:#000"></i><svg style="left:90px;top:242px" width="16" height="16" viewBox="0 0 16 16"><path d="M.5 13.500v-10.500q0-1 1-1h4l1.500 1.500h7.500v10z" fill="url(#fo)" stroke="#b58a22" stroke-width=".9"/><path d="M.5 13.500h14.500M14.500 4v9.500" stroke="#7a5a10" stroke-width="1" fill="none"/><path d="M1.500 4.500h12" stroke="#fff6c8" stroke-width="1" opacity=".8"/></svg><span class="t" style="left:110px;top:244px;letter-spacing:-0.468px;">Views</span><i style="left:97px;top:266px;width:6px;height:1px;background:repeating-linear-gradient(to right,#a8a8a0 0 1px,transparent 1px 2px)"></i><i style="left:87px;top:262px;width:9px;height:9px;border:1px solid #8f9bab;border-radius:1.500px;background:linear-gradient(135deg,#fff 30%,#c9c7ba 100%)"></i><i style="left:89px;top:266px;width:5px;height:1px;background:#000"></i><i style="left:91px;top:264px;width:1px;height:5px;background:#000"></i><svg style="left:109px;top:258px" width="16" height="16" viewBox="0 0 16 16"><rect x="2.500" y="1.500" width="13" height="12" fill="#eef3fd" stroke="#9fb2de"/><rect x="3" y="2" width="12" height="2.500" fill="#a9bfea"/><path d="M11.500 6.500h3.500M11.500 9h3.500M11.500 11.500h3.500" stroke="#aebfe6"/><path d="M13 4.500v8.500" stroke="#c4d0ee"/><rect x=".5" y="5.500" width="10" height="10" fill="#fff" stroke="#3f4f6f"/><path d="M2 7l7 7M9 7l-7 7" stroke="#6a7488" stroke-width=".9" stroke-dasharray="1.400 1.100"/><rect x="2.500" y="7.500" width="6" height="6" fill="none" stroke="#8a94a8" stroke-dasharray="1 1"/></svg><span class="t" style="left:129px;top:260px;letter-spacing:-0.012px;">Query1</span><i style="left:97px;top:282px;width:6px;height:1px;background:repeating-linear-gradient(to right,#a8a8a0 0 1px,transparent 1px 2px)"></i><i style="left:87px;top:278px;width:9px;height:9px;border:1px solid #8f9bab;border-radius:1.500px;background:linear-gradient(135deg,#fff 30%,#c9c7ba 100%)"></i><i style="left:89px;top:282px;width:5px;height:1px;background:#000"></i><i style="left:91px;top:280px;width:1px;height:5px;background:#000"></i><svg style="left:109px;top:274px" width="16" height="16" viewBox="0 0 16 16"><rect x="2.500" y="1.500" width="13" height="12" fill="#eef3fd" stroke="#9fb2de"/><rect x="3" y="2" width="12" height="2.500" fill="#a9bfea"/><path d="M11.500 6.500h3.500M11.500 9h3.500M11.500 11.500h3.500" stroke="#aebfe6"/><path d="M13 4.500v8.500" stroke="#c4d0ee"/><rect x=".5" y="5.500" width="10" height="10" fill="#fff" stroke="#3f4f6f"/><path d="M2 7l7 7M9 7l-7 7" stroke="#6a7488" stroke-width=".9" stroke-dasharray="1.400 1.100"/><rect x="2.500" y="7.500" width="6" height="6" fill="none" stroke="#8a94a8" stroke-dasharray="1 1"/></svg><span class="t" style="left:129px;top:276px;letter-spacing:-0.245px;">QueryGetMessageBySender</span><i style="left:73px;top:298px;width:11px;height:1px;background:repeating-linear-gradient(to right,#a8a8a0 0 1px,transparent 1px 2px)"></i><svg style="left:90px;top:290px" width="16" height="16" viewBox="0 0 16 16"><path d="M.5 13.500v-10.500q0-1 1-1h4l1.500 1.500h7.500v10z" fill="url(#fo)" stroke="#b58a22" stroke-width=".9"/><path d="M.5 13.500h14.500M14.500 4v9.500" stroke="#7a5a10" stroke-width="1" fill="none"/><path d="M1.500 4.500h12" stroke="#fff6c8" stroke-width="1" opacity=".8"/></svg><span class="t" style="left:110px;top:292px;letter-spacing:-0.160px;">Stored Procedures</span><i style="left:78px;top:314px;width:6px;height:1px;background:repeating-linear-gradient(to right,#a8a8a0 0 1px,transparent 1px 2px)"></i><i style="left:68px;top:310px;width:9px;height:9px;border:1px solid #8f9bab;border-radius:1.500px;background:linear-gradient(135deg,#fff 30%,#c9c7ba 100%)"></i><i style="left:70px;top:314px;width:5px;height:1px;background:#000"></i><i style="left:72px;top:312px;width:1px;height:5px;background:#000"></i><svg style="left:90px;top:306px" width="16" height="16" viewBox="0 0 16 16"><path d="M.5 13.500v-10.500q0-1 1-1h4l1.500 1.500h7.500v10z" fill="url(#fo)" stroke="#b58a22" stroke-width=".9"/><path d="M.5 13.500h14.500M14.500 4v9.500" stroke="#7a5a10" stroke-width="1" fill="none"/><path d="M1.500 4.500h12" stroke="#fff6c8" stroke-width="1" opacity=".8"/></svg><span class="t" style="left:110px;top:308px;letter-spacing:-0.188px;">Functions</span><i style="left:40px;top:330px;width:6px;height:1px;background:repeating-linear-gradient(to right,#a8a8a0 0 1px,transparent 1px 2px)"></i><i style="left:30px;top:326px;width:9px;height:9px;border:1px solid #8f9bab;border-radius:1.500px;background:linear-gradient(135deg,#fff 30%,#c9c7ba 100%)"></i><i style="left:32px;top:330px;width:5px;height:1px;background:#000"></i><svg style="left:52px;top:322px" width="17" height="16" viewBox="0 0 17 16"><rect x="1.500" y="1.500" width="8" height="8" fill="#5b8de6" stroke="#3a5fb0"/><rect x=".5" y="10" width="9" height="3" fill="#dfe3ea" stroke="#8a94a8" stroke-width=".6"/><rect x="6.500" y="4.500" width="8.500" height="8" fill="#3f77de" stroke="#2c4ea3"/><path d="M7 5l4 0l-4 4z" fill="#7da6f2" opacity=".7"/><rect x="5" y="13" width="11" height="3" fill="#e6e9ef" stroke="#7a84a0" stroke-width=".7"/><path d="M6.500 14.500h2M10 14.500h4" stroke="#5b6fa8"/></svg><span class="t" style="left:72px;top:324px;letter-spacing:-0.128px;">Servers</span><i style="left:59px;top:346px;width:6px;height:1px;background:repeating-linear-gradient(to right,#a8a8a0 0 1px,transparent 1px 2px)"></i><i style="left:49px;top:342px;width:9px;height:9px;border:1px solid #8f9bab;border-radius:1.500px;background:linear-gradient(135deg,#fff 30%,#c9c7ba 100%)"></i><i style="left:51px;top:346px;width:5px;height:1px;background:#000"></i><i style="left:53px;top:344px;width:1px;height:5px;background:#000"></i><svg style="left:72px;top:338px" width="16" height="16" viewBox="0 0 16 16"><rect x="2" y="1.500" width="11.500" height="10" fill="#3f77de" stroke="#2c4ea3"/><path d="M2.500 2l6 0l-6 6z" fill="#7da6f2" opacity=".7"/><rect x=".5" y="11.500" width="14" height="3.800" fill="#e6e9ef" stroke="#7a84a0" stroke-width=".7"/><path d="M2 13.500h6M10 13.500h3" stroke="#5b6fa8"/></svg><span class="t" style="left:91px;top:340px;letter-spacing:-0.715px;">GJulca_DELL</span><i style="left:34px;top:159px;width:1px;height:167px;background:repeating-linear-gradient(to bottom,#a8a8a0 0 1px,transparent 1px 2px)"></i><i style="left:53px;top:163px;width:1px;height:3px;background:repeating-linear-gradient(to bottom,#a8a8a0 0 1px,transparent 1px 2px)"></i><i style="left:72px;top:178px;width:1px;height:4px;background:repeating-linear-gradient(to bottom,#a8a8a0 0 1px,transparent 1px 2px)"></i><i style="left:72px;top:191px;width:1px;height:55px;background:repeating-linear-gradient(to bottom,#a8a8a0 0 1px,transparent 1px 2px)"></i><i style="left:72px;top:255px;width:1px;height:55px;background:repeating-linear-gradient(to bottom,#a8a8a0 0 1px,transparent 1px 2px)"></i><i style="left:91px;top:194px;width:1px;height:4px;background:repeating-linear-gradient(to bottom,#a8a8a0 0 1px,transparent 1px 2px)"></i><i style="left:91px;top:207px;width:1px;height:7px;background:repeating-linear-gradient(to bottom,#a8a8a0 0 1px,transparent 1px 2px)"></i><i style="left:91px;top:223px;width:1px;height:7px;background:repeating-linear-gradient(to bottom,#a8a8a0 0 1px,transparent 1px 2px)"></i><i style="left:91px;top:258px;width:1px;height:4px;background:repeating-linear-gradient(to bottom,#a8a8a0 0 1px,transparent 1px 2px)"></i><i style="left:91px;top:271px;width:1px;height:7px;background:repeating-linear-gradient(to bottom,#a8a8a0 0 1px,transparent 1px 2px)"></i><i style="left:53px;top:338px;width:1px;height:4px;background:repeating-linear-gradient(to bottom,#a8a8a0 0 1px,transparent 1px 2px)"></i>
<div style="left:293px;top:101px;width:901px;height:741px;background:#ece9d8;border-right:1px solid #aca899;border-bottom:1px solid #aca899"></div><i style="left:293px;top:101px;width:1px;height:741px;background:#aca899"></i><i style="left:289px;top:842px;width:910px;height:2px;background:linear-gradient(to bottom,#b8b4a2,#dcd9c9)"></i><i style="left:289px;top:102px;width:4px;height:740px;background:#f2f0e6"></i><i style="left:1194px;top:102px;width:4px;height:740px;background:#f2f0e6"></i><i style="left:293px;top:120px;width:898px;height:1px;background:#9d9a8a"></i><i style="left:293px;top:121px;width:898px;height:27px;background:#f1efe6"></i><svg style="left:799px;top:102px" width="132" height="19" viewBox="0 0 132 19"><path d="M.5 19 L11.5 6.5 Q14 2.5 18 2.5 L128.5 2.5 Q131.5 2.5 131.5 5.5 L131.5 19" fill="url(#tg)" stroke="#9d9a8a"/></svg><svg style="left:730px;top:102px" width="80" height="19" viewBox="0 0 80 19"><path d="M.5 19 L11.5 6.5 Q14 2.5 18 2.5 L76.5 2.5 Q79.5 2.5 79.5 5.5 L79.5 19" fill="url(#tg)" stroke="#9d9a8a"/></svg><svg style="left:622px;top:102px" width="119" height="19" viewBox="0 0 119 19"><path d="M.5 19 L11.5 6.5 Q14 2.5 18 2.5 L115.5 2.5 Q118.5 2.5 118.5 5.5 L118.5 19" fill="url(#tg)" stroke="#9d9a8a"/></svg><svg style="left:487px;top:102px" width="146" height="19" viewBox="0 0 146 19"><path d="M.5 19 L11.5 6.5 Q14 2.5 18 2.5 L142.5 2.5 Q145.5 2.5 145.5 5.5 L145.5 19" fill="url(#tg)" stroke="#9d9a8a"/></svg><svg style="left:367px;top:102px" width="131" height="19" viewBox="0 0 131 19"><path d="M.5 19 L11.5 6.5 Q14 2.5 18 2.5 L127.5 2.5 Q130.5 2.5 130.5 5.5 L130.5 19" fill="url(#tg)" stroke="#9d9a8a"/></svg><svg style="left:296px;top:102px" width="82" height="19" viewBox="0 0 82 19"><path d="M.5 19 L11.5 6.5 Q14 2.5 18 2.5 L78.5 2.5 Q81.5 2.5 81.5 5.5 L81.5 19" fill="url(#tg)" stroke="#9d9a8a"/></svg><svg style="left:922px;top:102px" width="112" height="19" viewBox="0 0 112 19"><path d="M.5 19 L11.5 6.5 Q14 2.5 18 2.5 L108.5 2.5 Q111.5 2.5 111.5 5.5 L111.5 19" fill="#fff" stroke="#8d8a7a"/></svg><i style="left:923px;top:120px;width:110px;height:1px;background:#fff"></i><span class="t" style="left:313px;top:106px;letter-spacing:-0.047px;">Web.Config</span><span class="t" style="left:391px;top:106px;letter-spacing:-0.117px;">MasterPage.master</span><span class="t" style="left:511px;top:106px;letter-spacing:-0.052px;">MasterPage.master.cs</span><span class="t" style="left:643px;top:106px;letter-spacing:-0.117px;">MainPage.aspx.cs</span><span class="t" style="left:749px;top:106px;letter-spacing:-0.098px;">Start Page</span><span class="t" style="left:820px;top:106px;">Registration.aspx.cs</span><span class="t" style="left:936px;top:106px;font-weight:bold;letter-spacing:0.311px;">Chatting.aspx.cs</span><svg style="left:1158px;top:110px" width="8" height="4" viewBox="0 0 8 4"><path d="M0 0h8 l-4 4 z" fill="#000"/></svg><svg style="left:1175px;top:107px" width="11" height="10" viewBox="0 0 11 10"><path d="M1.500 1.500l7.500 7.500M9 1.500l-7.500 7.500" stroke="#000" stroke-width="2"/></svg><div style="left:294px;top:124px;width:447px;height:22px;background:#fff;border:1px solid #7f9db9"></div><div style="left:745px;top:124px;width:446px;height:22px;background:#fff;border:1px solid #7f9db9"></div><div style="left:724px;top:126px;width:16px;height:19px;background:linear-gradient(135deg,#d0dcfd,#b3c7f9);border:1px solid #e6edff;border-radius:2px"></div><svg style="left:727px;top:132px" width="10" height="7" viewBox="0 0 10 7"><path d="M1 1l4 4 4-4" stroke="#44609a" stroke-width="2" fill="none"/></svg><div style="left:1173px;top:126px;width:16px;height:19px;background:linear-gradient(135deg,#d0dcfd,#b3c7f9);border:1px solid #e6edff;border-radius:2px"></div><svg style="left:1176px;top:132px" width="10" height="7" viewBox="0 0 10 7"><path d="M1 1l4 4 4-4" stroke="#44609a" stroke-width="2" fill="none"/></svg><svg style="left:299px;top:127px" width="15" height="16" viewBox="0 0 15 16"><path d="M4 .5l4 3.500-4 3.500-4-3.500z" fill="#e6c43a" stroke="#9a7d1e" stroke-width=".8"/><path d="M11 3.500l3.500 3-3.500 3-3.500-3z" fill="#e060d8" stroke="#9a2a96" stroke-width=".8"/><path d="M10.500 9.500l3.500 3-3.500 3-3.500-3z" fill="#4aa8e8" stroke="#1d5f9a" stroke-width=".8"/><path d="M5.500 6.500v6h2M5.500 8h2" stroke="#3a5fb0" fill="none"/></svg><span class="t" style="left:316px;top:129px;letter-spacing:-0.121px;">Chatting</span><svg style="left:748px;top:126px" width="17" height="18" viewBox="0 0 17 18"><path d="M12 1l4.200 2.800v5.400l-4.200 2.800-4.200-2.800v-5.400z" fill="#a82aa8"/><path d="M7.800 3.800l4.200 2.700v5.500l-4.200-2.800z" fill="#d258d2"/><path d="M12 1l4.200 2.800-4.200 2.700-4.200-2.700z" fill="#f2a2f2"/><path d="M1 3.500h5M1.500 5.500h4" stroke="#8a8a8a" stroke-width=".8"/><circle cx="3.800" cy="9" r="2.500" fill="#f6d84a" stroke="#b08a1a" stroke-width=".9"/><circle cx="3.500" cy="8.300" r=".8" fill="#fff"/><path d="M3.800 11.500v5.500M3.800 13.500l2.200 1M3.800 15.500l1.800 .8" stroke="#c89a1a" stroke-width="1.400" fill="none"/></svg><span class="t" style="left:766px;top:129px;letter-spacing:-0.150px;">GetUpdatedInfoFromMessageTable()</span><div style="left:294px;top:148px;width:880px;height:675px;background:#fff;overflow:hidden"><i style="left:0;top:0;width:18px;height:675px;background:#ece9d8"></i><i style="left:23px;top:0;width:1px;height:675px;background:#8e8e8e"></i><i style="left:0;top:0;width:880px;height:1px;background:#c9c7ba"></i><span class="c" style="left:96px;top:1px">strUserSender = (<span style="position:static;display:inline;color:#0000ff">string</span>)Session[<span style="position:static;display:inline;color:#a01c1c">"UserName"</span>]; ;</span><span class="c" style="left:96px;top:18px">strTextMessage = txtSendMessage.Text;</span><span class="c" style="left:96px;top:52px"><span style="position:static;display:inline;color:#2b91af">OleDbCommand</span> cmd = <span style="position:static;display:inline;color:#0000ff">new</span> <span style="position:static;display:inline;color:#2b91af">OleDbCommand</span>();</span><span class="c" style="left:96px;top:69px"><span style="position:static;display:inline;color:#2b91af">OleDbConnection</span> con = <span style="position:static;display:inline;color:#0000ff">new</span> <span style="position:static;display:inline;color:#2b91af">OleDbConnection</span>(strconnectString);</span><span class="c" style="left:96px;top:86px"><span style="position:static;display:inline;color:#0000ff">try</span></span><span class="c" style="left:96px;top:103px">{</span><span class="c" style="left:128px;top:120px">cmd.Connection = con;</span><span class="c" style="left:128px;top:137px">cmd.CommandTimeout = 120; <span style="position:static;display:inline;color:#008000">//2 minutes</span></span><span class="c" style="left:128px;top:171px">cmd.CommandText = <span style="position:static;display:inline;color:#a01c1c">"Select Top 20 UserSender,UserReceiver,TextMessage, "</span> +</span><span class="c" style="left:272px;top:188px"><span style="position:static;display:inline;color:#a01c1c">"(select Top 1 FirstName from UserTable where MessageTable.UserSender = UserTable.UserName) as FirstName "</span> +</span><span class="c" style="left:272px;top:205px"><span style="position:static;display:inline;color:#a01c1c">"From "</span>   + MESSAGE_TABLE_NAME + <span style="position:static;display:inline;color:#a01c1c">" "</span> +</span><span class="c" style="left:272px;top:222px"><span style="position:static;display:inline;color:#a01c1c">"Where "</span>  + MESSAGE_COL_USER_RECEIVER + <span style="position:static;display:inline;color:#a01c1c">" = @UserReceiver "</span> +</span><span class="c" style="left:272px;top:239px"><span style="position:static;display:inline;color:#a01c1c">"AND "</span>    + MESSAGE_COL_USER_SENDER + <span style="position:static;display:inline;color:#a01c1c">" =@UserSender "</span> +</span><span class="c" style="left:272px;top:256px"><span style="position:static;display:inline;color:#a01c1c">"OR("</span> + MESSAGE_COL_USER_RECEIVER + <span style="position:static;display:inline;color:#a01c1c">" = @UserSender "</span> +</span><span class="c" style="left:304px;top:273px"><span style="position:static;display:inline;color:#a01c1c">"AND "</span> + MESSAGE_COL_USER_SENDER + <span style="position:static;display:inline;color:#a01c1c">" =@UserReceiver) "</span> +</span><span class="c" style="left:272px;top:290px"><span style="position:static;display:inline;color:#a01c1c">"Order by "</span> + MESSAGE_COL_MSGDATE +<span style="position:static;display:inline;color:#a01c1c">" DESC"</span>;</span><span class="c" style="left:128px;top:307px"><span style="position:static;display:inline;color:#008000">//Add parameters</span></span><span class="c" style="left:128px;top:324px">cmd.Parameters.AddWithValue(<span style="position:static;display:inline;color:#a01c1c">"@UserReceiver"</span>, strUserReceiver);</span><span class="c" style="left:128px;top:341px">cmd.Parameters.AddWithValue(<span style="position:static;display:inline;color:#a01c1c">"@UserSender"</span>, strUserSender);</span><span class="c" style="left:128px;top:375px"><span style="position:static;display:inline;color:#008000">//Open the Connection</span></span><span class="c" style="left:128px;top:392px">con.Open();</span><span class="c" style="left:128px;top:426px"><span style="position:static;display:inline;color:#008000">//Execute command</span></span><span class="c" style="left:128px;top:443px"><span style="position:static;display:inline;color:#2b91af">OleDbDataReader</span> dr = cmd.ExecuteReader(<span style="position:static;display:inline;color:#2b91af">CommandBehavior</span>.CloseConnection);</span><span class="c" style="left:128px;top:460px"><span style="position:static;display:inline;color:#008000">//Repopulate ListBoxMessage</span></span><span class="c" style="left:128px;top:477px"><span style="position:static;display:inline;color:#0000ff">if</span> (dr.HasRows)</span><span class="c" style="left:128px;top:494px">{</span><span class="c" style="left:160px;top:511px">lstMessageHistory.Items.Clear();</span><span class="c" style="left:160px;top:528px"><span style="position:static;display:inline;color:#0000ff">while</span> (dr.Read())</span><span class="c" style="left:160px;top:545px">{</span><span class="c" style="left:192px;top:562px">strNextMessage = dr.GetString(2);</span><span class="c" style="left:192px;top:579px">strSenderFirstName = dr.GetString(3);</span><span class="c" style="left:192px;top:596px">strNextMessage = strSenderFirstName + <span style="position:static;display:inline;color:#a01c1c">": "</span> + strNextMessage;</span><span class="c" style="left:192px;top:613px">lstMessageHistory.Items.Add(strNextMessage);</span><span class="c" style="left:160px;top:630px">}</span><span class="c" style="left:128px;top:647px">}</span><span class="c" style="left:128px;top:664px">dr.Close();</span></div><div style="left:1174px;top:148px;width:17px;height:675px;background:linear-gradient(to right,#f3f1ec,#fefefb)"></div><div style="left:1174px;top:149px;width:17px;height:6px;background:#ece9d8;border:1px solid #fff;border-right-color:#aca899;border-bottom-color:#aca899"></div><div style="left:1175px;top:156px;width:15px;height:16px;background:linear-gradient(135deg,#d3defc,#b7cafa);border:1px solid #fff;border-radius:2px;box-shadow:0 0 0 .5px #b4c4f0"></div><svg style="left:1175px;top:156px" width="15" height="16" viewBox="0 0 15 16"><path d="M4 9.5l3.500-3.500 3.500 3.500" stroke="#44609a" stroke-width="2" fill="none"/></svg><div style="left:1175px;top:806px;width:15px;height:16px;background:linear-gradient(135deg,#d3defc,#b7cafa);border:1px solid #fff;border-radius:2px;box-shadow:0 0 0 .5px #b4c4f0"></div><svg style="left:1175px;top:806px" width="15" height="16" viewBox="0 0 15 16"><path d="M4 6l3.500 3.500 3.500-3.500" stroke="#44609a" stroke-width="2" fill="none"/></svg><div style="left:1175px;top:515px;width:15px;height:113px;background:linear-gradient(to right,#c9d8fc,#bfd0fb 60%,#b4c6f7);border:1px solid #fff;border-right-color:#9db0e8;border-bottom-color:#9db0e8;border-radius:2px"></div><i style="left:1179px;top:567px;width:6px;height:1px;background:#eef3ff"></i><i style="left:1180px;top:568px;width:6px;height:1px;background:#8fa4dc"></i><i style="left:1179px;top:569px;width:6px;height:1px;background:#eef3ff"></i><i style="left:1180px;top:570px;width:6px;height:1px;background:#8fa4dc"></i><i style="left:1179px;top:571px;width:6px;height:1px;background:#eef3ff"></i><i style="left:1180px;top:572px;width:6px;height:1px;background:#8fa4dc"></i><i style="left:1179px;top:573px;width:6px;height:1px;background:#eef3ff"></i><i style="left:1180px;top:574px;width:6px;height:1px;background:#8fa4dc"></i><div style="left:294px;top:823px;width:880px;height:17px;background:linear-gradient(to bottom,#f3f1ec,#fefefb)"></div><div style="left:295px;top:824px;width:16px;height:15px;background:linear-gradient(135deg,#d3defc,#b7cafa);border:1px solid #fff;border-radius:2px;box-shadow:0 0 0 .5px #b4c4f0"></div><svg style="left:295px;top:824px" width="16" height="15" viewBox="0 0 16 15"><path d="M9.5 4l-3.500 3.500 3.500 3.500" stroke="#44609a" stroke-width="2" fill="none"/></svg><div style="left:1157px;top:824px;width:16px;height:15px;background:linear-gradient(135deg,#d3defc,#b7cafa);border:1px solid #fff;border-radius:2px;box-shadow:0 0 0 .5px #b4c4f0"></div><svg style="left:1157px;top:824px" width="16" height="15" viewBox="0 0 16 15"><path d="M6 4l3.500 3.500-3.500 3.500" stroke="#44609a" stroke-width="2" fill="none"/></svg><div style="left:312px;top:824px;width:563px;height:15px;background:linear-gradient(to bottom,#c9d8fc,#bfd0fb 60%,#b4c6f7);border:1px solid #fff;border-right-color:#9db0e8;border-bottom-color:#9db0e8;border-radius:2px"></div><i style="left:589px;top:828px;width:1px;height:6px;background:#eef3ff"></i><i style="left:590px;top:829px;width:1px;height:6px;background:#8fa4dc"></i><i style="left:591px;top:828px;width:1px;height:6px;background:#eef3ff"></i><i style="left:592px;top:829px;width:1px;height:6px;background:#8fa4dc"></i><i style="left:593px;top:828px;width:1px;height:6px;background:#eef3ff"></i><i style="left:594px;top:829px;width:1px;height:6px;background:#8fa4dc"></i><i style="left:595px;top:828px;width:1px;height:6px;background:#eef3ff"></i><i style="left:596px;top:829px;width:1px;height:6px;background:#8fa4dc"></i><div style="left:1174px;top:823px;width:17px;height:17px;background:#ece9d8"></div>
<div style="left:1198px;top:101px;width:242px;height:742px;background:#fff;border-left:1px solid #aca899;border-right:1px solid #aca899;border-bottom:1px solid #aca899"></div><div style="left:1199px;top:102px;width:240px;height:17px;background:linear-gradient(to bottom,#3876dc 0%,#2d69d2 50%,#2a61c8 100%)"></div><span class="t" style="left:1202px;top:104px;color:#fff;letter-spacing:-0.163px;">Solution Explorer</span><svg style="left:1391px;top:110px" width="8" height="4" viewBox="0 0 8 4"><path d="M0 0h8 l-4 4 z" fill="#fff"/></svg><svg style="left:1406px;top:105px" width="9" height="12" viewBox="0 0 9 12"><path d="M2.500 .5h4v5.500h-4z M5.500 .5v5.500 M1 6.500h7 M4.500 7v3.500" stroke="#fff" fill="none"/></svg><svg style="left:1424px;top:106px" width="10" height="9" viewBox="0 0 10 9"><path d="M1 1l7.500 6.500M8.500 1l-7.500 6.500" stroke="#fff" stroke-width="1.900"/></svg><div style="left:1199px;top:119px;width:241px;height:26px;background:linear-gradient(to bottom,#fbfaf7 0%,#efede4 40%,#d3d1c1 100%);border-bottom:1px solid #bab8a8"></div><svg style="left:1206px;top:123px" width="17" height="16" viewBox="0 0 17 16"><rect x=".5" y=".5" width="9" height="8" fill="#e6e5ea" stroke="#a9a8b4"/><rect x="4.500" y="5.500" width="12" height="10" fill="#fff" stroke="#6f7f9f"/><rect x="5" y="6" width="11" height="2" fill="#b6c2dc"/><path d="M6.500 10.500h2M10 10.500h5M6.500 13h2M10 13h5" stroke="#6f86b8" stroke-width="1.200"/></svg><i style="left:1228px;top:123px;width:1px;height:17px;background:#c6c3b1"></i><i style="left:1229px;top:124px;width:1px;height:17px;background:rgba(255,255,255,.45)"></i><svg style="left:1236px;top:124px" width="14" height="15" viewBox="0 0 14 15"><path d="M4.500 .5h6l3 3v8h-9z" fill="#f2f2f6" stroke="#c3c2d0"/><path d="M.5 3.500h6l3 3v8h-9z" fill="#f6f6fa" stroke="#c3c2d0"/></svg><svg style="left:1259px;top:124px" width="15" height="15" viewBox="0 0 15 15"><rect x=".5" y=".5" width="14" height="14" fill="#f4f8ff" stroke="#2c4ea3"/><rect x="1" y="1" width="13" height="2" fill="#4f79d6"/><g transform="translate(-.5,0)"><path d="M4.500 9a3.500 3.500 0 0 1 6-2.500" stroke="#55a81e" stroke-width="1.700" fill="none"/><path d="M11.800 4.200v4h-4z" fill="#55a81e"/><path d="M11.500 9a3.500 3.500 0 0 1-6 2.500" stroke="#55a81e" stroke-width="1.700" fill="none"/><path d="M4.200 13.800v-4h4z" fill="#55a81e"/></g></svg><div style="left:1278px;top:121px;width:23px;height:22px;background:#dfe6f7;border:1px solid #3a5fb0"></div><svg style="left:1282px;top:124px" width="16" height="16" viewBox="0 0 16 16"><path d="M.5.500h4l2 2v5h-6z" fill="#fff" stroke="#3f66b5"/><path d="M9.500 7.500h4l2 2v6h-6z" fill="#fff" stroke="#3f66b5"/><path d="M11 11h3M11 13h3" stroke="#5585d6"/><path d="M3 9v4h4M5 11l2 2-2 2" stroke="#1d3f9a" stroke-width="1.300" fill="none"/><path d="M8.500 1v4M7 3.500l1.500 1.500 1.500-1.500" stroke="#1d3f9a" stroke-width="1.200" fill="none"/></svg><i style="left:1304px;top:123px;width:1px;height:17px;background:#c6c3b1"></i><i style="left:1305px;top:124px;width:1px;height:17px;background:rgba(255,255,255,.45)"></i><svg style="left:1311px;top:125px" width="14" height="14" viewBox="0 0 14 14"><rect x=".5" y=".5" width="13" height="13" fill="#fff" stroke="#5a6070"/><path d="M3 4h5M3 6.500h3M5 6.500h5M3 9h6" stroke="#3a4050" stroke-width="1.100"/></svg><svg style="left:1333px;top:125px" width="15" height="14" viewBox="0 0 15 14"><rect x=".5" y=".5" width="14" height="13" fill="#f2f4fa" stroke="#6f7f9f"/><rect x="1" y="1" width="13" height="2.500" fill="#8fa6d8"/><path d="M3 6h3M8 6h4M3 8.500h3M8 8.500h4M3 11h3M8 11h4" stroke="#7f96c6" stroke-width="1.200"/></svg><i style="left:1355px;top:123px;width:1px;height:17px;background:#c6c3b1"></i><i style="left:1356px;top:124px;width:1px;height:17px;background:rgba(255,255,255,.45)"></i><svg style="left:1362px;top:123px" width="17" height="16" viewBox="0 0 17 16"><rect x=".5" y=".5" width="9" height="9" fill="#fff" stroke="#222"/><rect x="4.500" y="4.500" width="12" height="11" fill="#fff" stroke="#222"/><rect x="5" y="5" width="11" height="2" fill="#222"/><circle cx="10.500" cy="11" r="3.500" fill="#2f62d8" stroke="#173a8a"/><path d="M8 10c1.500-1 3-1 5 .5" stroke="#7ac143" stroke-width="1.300" fill="none"/></svg><svg style="left:1385px;top:123px" width="17" height="17" viewBox="0 0 17 17"><circle cx="10" cy="8" r="5.500" fill="#3aa048" stroke="#1f6a8a" stroke-width=".8"/><path d="M6 5.500c2-3 6-3.500 8-1.500c-1 3-3 1-4 3s-3 1-4-1.500z" fill="#3f7be0"/><path d="M3.500 4v12" stroke="#c8202a" stroke-width="3"/><path d="M1 1.500l5 2.500" stroke="#8a6410" stroke-width="2"/><circle cx="3.500" cy="2" r="1.500" fill="#e8c23a"/></svg><svg style="left:1210px;top:146px" width="17" height="16" viewBox="0 0 17 16"><circle cx="10.500" cy="6" r="5.500" fill="#3aa048" stroke="#1f6a8a" stroke-width=".8"/><path d="M6 4c2-3 6-3.500 8-1.500c-1 3-3 1-4 3s-3 1-4-1.500z" fill="#3f7be0"/><path d="M9 9c2 0 4 1 5.500-.5" stroke="#2f62c8" stroke-width="2" fill="none"/><rect x=".5" y="4.500" width="5" height="7" fill="#d8d8d0" stroke="#9a9a90" stroke-width=".7"/><rect x="3.500" y="6.500" width="6" height="8.500" fill="#fff" stroke="#3f66b5"/><path transform="translate(0,.5)" d="M5 9h3M5 11h3M5 13h3" stroke="#4a78d0"/></svg><span class="t" style="left:1230px;top:148px;font-weight:bold;font-size:12.25px;letter-spacing:0.052px;">C:\...\GJ_IMessenger\</span><i style="left:1216px;top:170px;width:6px;height:1px;background:repeating-linear-gradient(to right,#a8a8a0 0 1px,transparent 1px 2px)"></i><i style="left:1206px;top:166px;width:9px;height:9px;border:1px solid #8f9bab;border-radius:1.500px;background:linear-gradient(135deg,#fff 30%,#c9c7ba 100%)"></i><i style="left:1208px;top:170px;width:5px;height:1px;background:#000"></i><svg style="left:1228px;top:162px" width="16" height="16" viewBox="0 0 16 16"><path d="M.5 13.500v-10c0-1 .5-1.500 1.500-1.500h3.500l1.500 1.500h6v2.500" fill="#e4e4e4" stroke="#a9a9a9" stroke-width=".8"/><path d="M.5 13.500l3-7.500h12l-3 7.500z" fill="url(#gf)" stroke="#8e8e8e" stroke-width=".9"/></svg><span class="t" style="left:1248px;top:164px;letter-spacing:-0.241px;">App_Data</span><i style="left:1235px;top:186px;width:6px;height:1px;background:repeating-linear-gradient(to right,#a8a8a0 0 1px,transparent 1px 2px)"></i><i style="left:1225px;top:182px;width:9px;height:9px;border:1px solid #8f9bab;border-radius:1.500px;background:linear-gradient(135deg,#fff 30%,#c9c7ba 100%)"></i><i style="left:1227px;top:186px;width:5px;height:1px;background:#000"></i><svg style="left:1248px;top:178px" width="16" height="16" viewBox="0 0 16 16"><path d="M2.5 2.5v11c0 2.200 10 2.200 10 0v-11z" fill="url(#cy)" stroke="#c48a10" stroke-width=".7"/><ellipse cx="7.5" cy="2.5" rx="5" ry="1.600" fill="#fdf2b8" stroke="#d7a32a" stroke-width=".6"/></svg><span class="t" style="left:1267px;top:180px;letter-spacing:-0.407px;">GJ_MessengerDB.mdb</span><i style="left:1249px;top:202px;width:11px;height:1px;background:repeating-linear-gradient(to right,#a8a8a0 0 1px,transparent 1px 2px)"></i><svg style="left:1267px;top:194px" width="16" height="16" viewBox="0 0 16 16"><path d="M4.500 2.500h7l3 3v9.500h-10z" fill="#fff" stroke="#3f66b5"/><path d="M11.500 2.500v3h3" fill="#dbe6fa" stroke="#3f66b5" stroke-width=".8"/><path transform="translate(0,.5)" d="M7 9h6M7 11h6M7 13h4" stroke="#5585d6"/><path d="M1.500 1c0 4 1 5 4 5v-2l3.500 3-3.500 3v-2c-4 0-5.500-2-4-7z" fill="#3f7be0" stroke="#2450a8" stroke-width=".6"/></svg><span class="t" style="left:1286px;top:196px;letter-spacing:-0.367px;">GJ_MessengerDB.ldb</span><i style="left:1216px;top:218px;width:6px;height:1px;background:repeating-linear-gradient(to right,#a8a8a0 0 1px,transparent 1px 2px)"></i><i style="left:1206px;top:214px;width:9px;height:9px;border:1px solid #8f9bab;border-radius:1.500px;background:linear-gradient(135deg,#fff 30%,#c9c7ba 100%)"></i><i style="left:1208px;top:218px;width:5px;height:1px;background:#000"></i><svg style="left:1228px;top:210px" width="16" height="16" viewBox="0 0 16 16"><path d="M.5 13.500v-10c0-1 .5-1.500 1.500-1.500h3.500l1.500 1.500h6v2.500" fill="#e4e4e4" stroke="#a9a9a9" stroke-width=".8"/><path d="M.5 13.500l3-7.500h12l-3 7.500z" fill="url(#gf)" stroke="#8e8e8e" stroke-width=".9"/></svg><span class="t" style="left:1248px;top:212px;letter-spacing:-0.343px;">App_Themes</span><i style="left:1235px;top:234px;width:6px;height:1px;background:repeating-linear-gradient(to right,#a8a8a0 0 1px,transparent 1px 2px)"></i><i style="left:1225px;top:230px;width:9px;height:9px;border:1px solid #8f9bab;border-radius:1.500px;background:linear-gradient(135deg,#fff 30%,#c9c7ba 100%)"></i><i style="left:1227px;top:234px;width:5px;height:1px;background:#000"></i><svg style="left:1247px;top:226px" width="16" height="16" viewBox="0 0 16 16"><path d="M.5 13.500v-10c0-1 .5-1.500 1.500-1.500h3.500l1.500 1.500h6v2.500" fill="#e4e4e4" stroke="#a9a9a9" stroke-width=".8"/><path d="M.5 13.500l3-7.500h12l-3 7.500z" fill="url(#gf)" stroke="#8e8e8e" stroke-width=".9"/></svg><span class="t" style="left:1267px;top:228px;letter-spacing:-0.756px;">GJTheme</span><i style="left:1249px;top:250px;width:11px;height:1px;background:repeating-linear-gradient(to right,#a8a8a0 0 1px,transparent 1px 2px)"></i><svg style="left:1267px;top:242px" width="16" height="16" viewBox="0 0 16 16"><rect x=".75" y="1.750" width="13.500" height="12.500" fill="#dbe8fb" stroke="#4d4d4d" stroke-width="1.100"/><circle cx="9.500" cy="5" r="1.700" fill="#f7d9d9" stroke="#d03a3a" stroke-width="1"/><path d="M1.300 13.700v-2.500l4-4.500 4 4 1.800-1.700 2.600 2.700v2z" fill="#4da34a"/><path d="M1.300 11.200l4-4.500 4 4 1.800-1.700 2.600 2.700" stroke="#2d6e2b" stroke-width="1" fill="none"/><path d="M1.500 13.700h12.500" stroke="#7fc27a"/></svg><span class="t" style="left:1286px;top:244px;letter-spacing:0.030px;">Registration1.gif</span><i style="left:1249px;top:266px;width:11px;height:1px;background:repeating-linear-gradient(to right,#a8a8a0 0 1px,transparent 1px 2px)"></i><svg style="left:1267px;top:258px" width="16" height="16" viewBox="0 0 16 16"><rect x=".75" y="1.750" width="13.500" height="12.500" fill="#dbe8fb" stroke="#4d4d4d" stroke-width="1.100"/><circle cx="9.500" cy="5" r="1.700" fill="#f7d9d9" stroke="#d03a3a" stroke-width="1"/><path d="M1.300 13.700v-2.500l4-4.500 4 4 1.800-1.700 2.600 2.700v2z" fill="#4da34a"/><path d="M1.300 11.200l4-4.500 4 4 1.800-1.700 2.600 2.700" stroke="#2d6e2b" stroke-width="1" fill="none"/><path d="M1.500 13.700h12.500" stroke="#7fc27a"/></svg><span class="t" style="left:1286px;top:260px;letter-spacing:0.019px;">RegistrationCongratulations.gif</span><i style="left:1249px;top:282px;width:11px;height:1px;background:repeating-linear-gradient(to right,#a8a8a0 0 1px,transparent 1px 2px)"></i><svg style="left:1267px;top:274px" width="16" height="16" viewBox="0 0 16 16"><rect x=".75" y="1.750" width="13.500" height="12.500" fill="#dbe8fb" stroke="#4d4d4d" stroke-width="1.100"/><circle cx="9.500" cy="5" r="1.700" fill="#f7d9d9" stroke="#d03a3a" stroke-width="1"/><path d="M1.300 13.700v-2.500l4-4.500 4 4 1.800-1.700 2.600 2.700v2z" fill="#4da34a"/><path d="M1.300 11.200l4-4.500 4 4 1.800-1.700 2.600 2.700" stroke="#2d6e2b" stroke-width="1" fill="none"/><path d="M1.500 13.700h12.500" stroke="#7fc27a"/></svg><span class="t" style="left:1286px;top:276px;letter-spacing:-0.198px;">TMA_Btn_Background.gif</span><i style="left:1249px;top:298px;width:11px;height:1px;background:repeating-linear-gradient(to right,#a8a8a0 0 1px,transparent 1px 2px)"></i><svg style="left:1267px;top:290px" width="16" height="16" viewBox="0 0 16 16"><path d="M3.500 1.500h8l3 3v10h-11z" fill="#fff" stroke="#5a7fc8" stroke-dasharray="1.500 .8"/><path d="M3.500 14.500h11v-10" fill="none" stroke="#3f66b5"/><rect x="11" y="6" width="2" height="2" fill="#3f9a8a"/><rect x="11" y="9" width="2" height="2" fill="#3a63c4"/><rect x="11" y="12" width="2" height="1.500" fill="#3a63c4"/><text x="-0.500" y="11.500" font-family="Liberation Serif" font-weight="bold" font-size="14" fill="#9c1420">A</text></svg><span class="t" style="left:1286px;top:292px;letter-spacing:-0.234px;">TMAStyleSheet.css</span><i style="left:1211px;top:314px;width:11px;height:1px;background:repeating-linear-gradient(to right,#a8a8a0 0 1px,transparent 1px 2px)"></i><svg style="left:1228px;top:306px" width="16" height="16" viewBox="0 0 16 16"><path d="M.5 3.500c0-1 .5-1.500 1.500-1.500h3.500l1.500 1.500h7v9h-13.500z" fill="url(#gf)" stroke="#a0a0a8" stroke-width=".8"/><circle cx="11.500" cy="11.500" r="3" fill="#3550c8"/><circle cx="11.500" cy="11.500" r="1.100" fill="#e6e9fb"/><path d="M11.500 7.500v8M7.500 11.500h8M8.700 8.700l5.600 5.600M14.300 8.700l-5.600 5.600" stroke="#3550c8" stroke-width="1.300"/><circle cx="11.500" cy="11.500" r="1.100" fill="#e6e9fb"/></svg><span class="t" style="left:1248px;top:308px;letter-spacing:-0.633px;">Bin</span><i style="left:1216px;top:330px;width:6px;height:1px;background:repeating-linear-gradient(to right,#a8a8a0 0 1px,transparent 1px 2px)"></i><i style="left:1206px;top:326px;width:9px;height:9px;border:1px solid #8f9bab;border-radius:1.500px;background:linear-gradient(135deg,#fff 30%,#c9c7ba 100%)"></i><i style="left:1208px;top:330px;width:5px;height:1px;background:#000"></i><i style="left:1210px;top:328px;width:1px;height:5px;background:#000"></i><svg style="left:1228px;top:322px" width="16" height="16" viewBox="0 0 16 16"><path d="M.5 13.500v-10.500q0-1 1-1h4l1.500 1.500h7.500v10z" fill="url(#fo)" stroke="#b58a22" stroke-width=".9"/><path d="M.5 13.500h14.500M14.500 4v9.500" stroke="#7a5a10" stroke-width="1" fill="none"/><path d="M1.500 4.500h12" stroke="#fff6c8" stroke-width="1" opacity=".8"/></svg><span class="t" style="left:1248px;top:324px;letter-spacing:-0.179px;">Images</span><i style="left:1216px;top:346px;width:6px;height:1px;background:repeating-linear-gradient(to right,#a8a8a0 0 1px,transparent 1px 2px)"></i><i style="left:1206px;top:342px;width:9px;height:9px;border:1px solid #8f9bab;border-radius:1.500px;background:linear-gradient(135deg,#fff 30%,#c9c7ba 100%)"></i><i style="left:1208px;top:346px;width:5px;height:1px;background:#000"></i><svg style="left:1228px;top:338px" width="16" height="16" viewBox="0 0 16 16"><path d="M.5 13.500v-10c0-1 .5-1.500 1.500-1.500h3.500l1.500 1.500h6v2.500" fill="#f3d36a" stroke="#b98a1c" stroke-width=".8"/><path d="M.5 13.500l3-7.500h12l-3 7.500z" fill="url(#fo)" stroke="#a87a14" stroke-width=".9"/></svg><span class="t" style="left:1248px;top:340px;letter-spacing:-0.097px;">MasterStyle</span><i style="left:1235px;top:362px;width:6px;height:1px;background:repeating-linear-gradient(to right,#a8a8a0 0 1px,transparent 1px 2px)"></i><i style="left:1225px;top:358px;width:9px;height:9px;border:1px solid #8f9bab;border-radius:1.500px;background:linear-gradient(135deg,#fff 30%,#c9c7ba 100%)"></i><i style="left:1227px;top:362px;width:5px;height:1px;background:#000"></i><i style="left:1229px;top:360px;width:1px;height:5px;background:#000"></i><svg style="left:1247px;top:354px" width="16" height="16" viewBox="0 0 16 16"><path d="M.5 13.500v-10.500q0-1 1-1h4l1.500 1.500h7.500v10z" fill="url(#fo)" stroke="#b58a22" stroke-width=".9"/><path d="M.5 13.500h14.500M14.500 4v9.500" stroke="#7a5a10" stroke-width="1" fill="none"/><path d="M1.500 4.500h12" stroke="#fff6c8" stroke-width="1" opacity=".8"/></svg><span class="t" style="left:1267px;top:356px;letter-spacing:-0.242px;">img</span><i style="left:1230px;top:378px;width:11px;height:1px;background:repeating-linear-gradient(to right,#a8a8a0 0 1px,transparent 1px 2px)"></i><svg style="left:1248px;top:370px" width="16" height="16" viewBox="0 0 16 16"><path d="M3.500 1.500h8l3 3v10h-11z" fill="#fff" stroke="#5a7fc8" stroke-dasharray="1.500 .8"/><path d="M3.500 14.500h11v-10" fill="none" stroke="#3f66b5"/><rect x="11" y="6" width="2" height="2" fill="#3f9a8a"/><rect x="11" y="9" width="2" height="2" fill="#3a63c4"/><rect x="11" y="12" width="2" height="1.500" fill="#3a63c4"/><text x="-0.500" y="11.500" font-family="Liberation Serif" font-weight="bold" font-size="14" fill="#9c1420">A</text></svg><span class="t" style="left:1267px;top:372px;letter-spacing:-0.133px;">MasterStyles.css</span><i style="left:1216px;top:394px;width:6px;height:1px;background:repeating-linear-gradient(to right,#a8a8a0 0 1px,transparent 1px 2px)"></i><i style="left:1206px;top:390px;width:9px;height:9px;border:1px solid #8f9bab;border-radius:1.500px;background:linear-gradient(135deg,#fff 30%,#c9c7ba 100%)"></i><i style="left:1208px;top:394px;width:5px;height:1px;background:#000"></i><i style="left:1210px;top:392px;width:1px;height:5px;background:#000"></i><svg style="left:1229px;top:386px" width="16" height="16" viewBox="0 0 16 16"><rect x="1.500" y="1" width="13" height="13" fill="#fdf7c8" stroke="#8e8e8e"/><path d="M1.500 14h13M14.500 1v13" stroke="#6e6e58" stroke-width="1"/><path d="M3.500 3.500h5" stroke="#4a6fc0" stroke-width="1.300"/><path d="M3.500 6.500h2M3.500 9h2M3.500 11.500h2" stroke="#7a8fc0" stroke-width="1.100"/><path d="M7 6.500h5M7 9h5M7 11.500h5" stroke="#6b6b6b" stroke-width="1.100"/><path d="M6.200 5v8" stroke="#b8b8a0" stroke-width=".6"/></svg><span class="t" style="left:1248px;top:388px;letter-spacing:-0.017px;">AddContacts.aspx</span><i style="left:1216px;top:410px;width:6px;height:1px;background:repeating-linear-gradient(to right,#a8a8a0 0 1px,transparent 1px 2px)"></i><i style="left:1206px;top:406px;width:9px;height:9px;border:1px solid #8f9bab;border-radius:1.500px;background:linear-gradient(135deg,#fff 30%,#c9c7ba 100%)"></i><i style="left:1208px;top:410px;width:5px;height:1px;background:#000"></i><svg style="left:1229px;top:402px" width="16" height="16" viewBox="0 0 16 16"><rect x="1.500" y="1" width="13" height="13" fill="#fdf7c8" stroke="#8e8e8e"/><path d="M1.500 14h13M14.500 1v13" stroke="#6e6e58" stroke-width="1"/><path d="M3.500 3.500h5" stroke="#4a6fc0" stroke-width="1.300"/><path d="M3.500 6.500h2M3.500 9h2M3.500 11.500h2" stroke="#7a8fc0" stroke-width="1.100"/><path d="M7 6.500h5M7 9h5M7 11.500h5" stroke="#6b6b6b" stroke-width="1.100"/><path d="M6.200 5v8" stroke="#b8b8a0" stroke-width=".6"/></svg><i style="left:1230px;top:426px;width:11px;height:1px;background:repeating-linear-gradient(to right,#a8a8a0 0 1px,transparent 1px 2px)"></i><svg style="left:1248px;top:418px" width="16" height="16" viewBox="0 0 16 16"><path d="M4.500 2.500h7l3 3v9.500h-10z" fill="#fff" stroke="#3f66b5"/><path d="M11.500 2.500v3h3" fill="#dbe6fa" stroke="#3f66b5" stroke-width=".8"/><path transform="translate(0,.5)" d="M7 9h6M7 11h6M7 13h4" stroke="#5585d6"/><path d="M1.500 1c0 4 1 5 4 5v-2l3.500 3-3.500 3v-2c-4 0-5.500-2-4-7z" fill="#3f7be0" stroke="#2450a8" stroke-width=".6"/></svg><span class="t" style="left:1267px;top:420px;letter-spacing:0.043px;">Chatting.aspx.cs</span><i style="left:1216px;top:442px;width:6px;height:1px;background:repeating-linear-gradient(to right,#a8a8a0 0 1px,transparent 1px 2px)"></i><i style="left:1206px;top:438px;width:9px;height:9px;border:1px solid #8f9bab;border-radius:1.500px;background:linear-gradient(135deg,#fff 30%,#c9c7ba 100%)"></i><i style="left:1208px;top:442px;width:5px;height:1px;background:#000"></i><i style="left:1210px;top:440px;width:1px;height:5px;background:#000"></i><svg style="left:1229px;top:434px" width="16" height="16" viewBox="0 0 16 16"><rect x="1.500" y="1" width="13" height="13" fill="#fdf7c8" stroke="#8e8e8e"/><path d="M1.500 14h13M14.500 1v13" stroke="#6e6e58" stroke-width="1"/><path d="M3.500 3.500h5" stroke="#4a6fc0" stroke-width="1.300"/><path d="M3.500 6.500h2M3.500 9h2M3.500 11.500h2" stroke="#7a8fc0" stroke-width="1.100"/><path d="M7 6.500h5M7 9h5M7 11.500h5" stroke="#6b6b6b" stroke-width="1.100"/><path d="M6.200 5v8" stroke="#b8b8a0" stroke-width=".6"/></svg><span class="t" style="left:1248px;top:436px;letter-spacing:0.015px;">CongratulationRegistration.aspx</span><i style="left:1216px;top:458px;width:6px;height:1px;background:repeating-linear-gradient(to right,#a8a8a0 0 1px,transparent 1px 2px)"></i><i style="left:1206px;top:454px;width:9px;height:9px;border:1px solid #8f9bab;border-radius:1.500px;background:linear-gradient(135deg,#fff 30%,#c9c7ba 100%)"></i><i style="left:1208px;top:458px;width:5px;height:1px;background:#000"></i><i style="left:1210px;top:456px;width:1px;height:5px;background:#000"></i><svg style="left:1229px;top:450px" width="16" height="16" viewBox="0 0 16 16"><rect x="1.500" y="1" width="13" height="13" fill="#fdf7c8" stroke="#8e8e8e"/><path d="M1.500 14h13M14.500 1v13" stroke="#6e6e58" stroke-width="1"/><path d="M3.500 3.500h5" stroke="#4a6fc0" stroke-width="1.300"/><path d="M3.500 6.500h2M3.500 9h2M3.500 11.500h2" stroke="#7a8fc0" stroke-width="1.100"/><path d="M7 6.500h5M7 9h5M7 11.500h5" stroke="#6b6b6b" stroke-width="1.100"/><path d="M6.200 5v8" stroke="#b8b8a0" stroke-width=".6"/></svg><span class="t" style="left:1248px;top:452px;letter-spacing:-0.048px;">ContactsList.aspx</span><i style="left:1216px;top:474px;width:6px;height:1px;background:repeating-linear-gradient(to right,#a8a8a0 0 1px,transparent 1px 2px)"></i><i style="left:1206px;top:470px;width:9px;height:9px;border:1px solid #8f9bab;border-radius:1.500px;background:linear-gradient(135deg,#fff 30%,#c9c7ba 100%)"></i><i style="left:1208px;top:474px;width:5px;height:1px;background:#000"></i><i style="left:1210px;top:472px;width:1px;height:5px;background:#000"></i><svg style="left:1229px;top:466px" width="16" height="16" viewBox="0 0 16 16"><rect x="1.500" y="1" width="13" height="13" fill="#fdf7c8" stroke="#8e8e8e"/><path d="M1.500 14h13M14.500 1v13" stroke="#6e6e58" stroke-width="1"/><path d="M3.500 3.500h5" stroke="#4a6fc0" stroke-width="1.300"/><path d="M3.500 6.500h2M3.500 9h2M3.500 11.500h2" stroke="#7a8fc0" stroke-width="1.100"/><path d="M7 6.500h5M7 9h5M7 11.500h5" stroke="#6b6b6b" stroke-width="1.100"/><path d="M6.200 5v8" stroke="#b8b8a0" stroke-width=".6"/></svg><span class="t" style="left:1248px;top:468px;letter-spacing:-0.046px;">ContactUs.aspx</span><i style="left:1216px;top:490px;width:6px;height:1px;background:repeating-linear-gradient(to right,#a8a8a0 0 1px,transparent 1px 2px)"></i><i style="left:1206px;top:486px;width:9px;height:9px;border:1px solid #8f9bab;border-radius:1.500px;background:linear-gradient(135deg,#fff 30%,#c9c7ba 100%)"></i><i style="left:1208px;top:490px;width:5px;height:1px;background:#000"></i><i style="left:1210px;top:488px;width:1px;height:5px;background:#000"></i><svg style="left:1229px;top:482px" width="16" height="16" viewBox="0 0 16 16"><rect x="1.500" y="1" width="13" height="13" fill="#fdf7c8" stroke="#8e8e8e"/><path d="M1.500 14h13M14.500 1v13" stroke="#6e6e58" stroke-width="1"/><path d="M3.500 3.500h5" stroke="#4a6fc0" stroke-width="1.300"/><path d="M3.500 6.500h2M3.500 9h2M3.500 11.500h2" stroke="#7a8fc0" stroke-width="1.100"/><path d="M7 6.500h5M7 9h5M7 11.500h5" stroke="#6b6b6b" stroke-width="1.100"/><path d="M6.200 5v8" stroke="#b8b8a0" stroke-width=".6"/></svg><span class="t" style="left:1248px;top:484px;letter-spacing:-0.123px;">Feeedback.aspx</span><i style="left:1216px;top:506px;width:6px;height:1px;background:repeating-linear-gradient(to right,#a8a8a0 0 1px,transparent 1px 2px)"></i><i style="left:1206px;top:502px;width:9px;height:9px;border:1px solid #8f9bab;border-radius:1.500px;background:linear-gradient(135deg,#fff 30%,#c9c7ba 100%)"></i><i style="left:1208px;top:506px;width:5px;height:1px;background:#000"></i><i style="left:1210px;top:504px;width:1px;height:5px;background:#000"></i><svg style="left:1229px;top:498px" width="16" height="16" viewBox="0 0 16 16"><rect x="1.500" y="1" width="13" height="13" fill="#fdf7c8" stroke="#8e8e8e"/><path d="M1.500 14h13M14.500 1v13" stroke="#6e6e58" stroke-width="1"/><path d="M3.500 3.500h5" stroke="#4a6fc0" stroke-width="1.300"/><path d="M3.500 6.500h2M3.500 9h2M3.500 11.500h2" stroke="#7a8fc0" stroke-width="1.100"/><path d="M7 6.500h5M7 9h5M7 11.500h5" stroke="#6b6b6b" stroke-width="1.100"/><path d="M6.200 5v8" stroke="#b8b8a0" stroke-width=".6"/></svg><span class="t" style="left:1248px;top:500px;letter-spacing:-0.102px;">Help.aspx</span><i style="left:1216px;top:522px;width:6px;height:1px;background:repeating-linear-gradient(to right,#a8a8a0 0 1px,transparent 1px 2px)"></i><i style="left:1206px;top:518px;width:9px;height:9px;border:1px solid #8f9bab;border-radius:1.500px;background:linear-gradient(135deg,#fff 30%,#c9c7ba 100%)"></i><i style="left:1208px;top:522px;width:5px;height:1px;background:#000"></i><i style="left:1210px;top:520px;width:1px;height:5px;background:#000"></i><svg style="left:1229px;top:514px" width="16" height="16" viewBox="0 0 16 16"><rect x="1.500" y="1" width="13" height="13" fill="#fdf7c8" stroke="#8e8e8e"/><path d="M1.500 14h13M14.500 1v13" stroke="#6e6e58" stroke-width="1"/><path d="M3.500 3.500h5" stroke="#4a6fc0" stroke-width="1.300"/><path d="M3.500 6.500h2M3.500 9h2M3.500 11.500h2" stroke="#7a8fc0" stroke-width="1.100"/><path d="M7 6.500h5M7 9h5M7 11.500h5" stroke="#6b6b6b" stroke-width="1.100"/><path d="M6.200 5v8" stroke="#b8b8a0" stroke-width=".6"/></svg><span class="t" style="left:1248px;top:516px;letter-spacing:-0.217px;">MainPage.aspx</span><i style="left:1216px;top:538px;width:6px;height:1px;background:repeating-linear-gradient(to right,#a8a8a0 0 1px,transparent 1px 2px)"></i><i style="left:1206px;top:534px;width:9px;height:9px;border:1px solid #8f9bab;border-radius:1.500px;background:linear-gradient(135deg,#fff 30%,#c9c7ba 100%)"></i><i style="left:1208px;top:538px;width:5px;height:1px;background:#000"></i><i style="left:1210px;top:536px;width:1px;height:5px;background:#000"></i><svg style="left:1229px;top:530px" width="16" height="16" viewBox="0 0 16 16"><rect x=".75" y="1.750" width="14.500" height="12.500" fill="#fbfbf0" stroke="#5a7fc8" stroke-width="1.100"/><rect x="1.300" y="2.300" width="13.400" height="2.700" fill="#4f7ad8"/><rect x="1.300" y="5" width="4" height="8.700" fill="#f9ec8a"/><rect x="5.300" y="5" width="9.400" height="8.700" fill="#fdfbe6"/></svg><span class="t" style="left:1248px;top:532px;letter-spacing:-0.117px;">MasterPage.master</span><i style="left:1216px;top:554px;width:6px;height:1px;background:repeating-linear-gradient(to right,#a8a8a0 0 1px,transparent 1px 2px)"></i><i style="left:1206px;top:550px;width:9px;height:9px;border:1px solid #8f9bab;border-radius:1.500px;background:linear-gradient(135deg,#fff 30%,#c9c7ba 100%)"></i><i style="left:1208px;top:554px;width:5px;height:1px;background:#000"></i><svg style="left:1229px;top:546px" width="16" height="16" viewBox="0 0 16 16"><rect x="1.500" y="1" width="13" height="13" fill="#fdf7c8" stroke="#8e8e8e"/><path d="M1.500 14h13M14.500 1v13" stroke="#6e6e58" stroke-width="1"/><path d="M3.500 3.500h5" stroke="#4a6fc0" stroke-width="1.300"/><path d="M3.500 6.500h2M3.500 9h2M3.500 11.500h2" stroke="#7a8fc0" stroke-width="1.100"/><path d="M7 6.500h5M7 9h5M7 11.500h5" stroke="#6b6b6b" stroke-width="1.100"/><path d="M6.200 5v8" stroke="#b8b8a0" stroke-width=".6"/></svg><span class="t" style="left:1248px;top:548px;">Registration.aspx</span><i style="left:1230px;top:570px;width:11px;height:1px;background:repeating-linear-gradient(to right,#a8a8a0 0 1px,transparent 1px 2px)"></i><svg style="left:1248px;top:562px" width="16" height="16" viewBox="0 0 16 16"><path d="M4.500 2.500h7l3 3v9.500h-10z" fill="#fff" stroke="#3f66b5"/><path d="M11.500 2.500v3h3" fill="#dbe6fa" stroke="#3f66b5" stroke-width=".8"/><path transform="translate(0,.5)" d="M7 9h6M7 11h6M7 13h4" stroke="#5585d6"/><path d="M1.500 1c0 4 1 5 4 5v-2l3.500 3-3.500 3v-2c-4 0-5.500-2-4-7z" fill="#3f7be0" stroke="#2450a8" stroke-width=".6"/></svg><span class="t" style="left:1267px;top:564px;">Registration.aspx.cs</span><i style="left:1216px;top:586px;width:6px;height:1px;background:repeating-linear-gradient(to right,#a8a8a0 0 1px,transparent 1px 2px)"></i><i style="left:1206px;top:582px;width:9px;height:9px;border:1px solid #8f9bab;border-radius:1.500px;background:linear-gradient(135deg,#fff 30%,#c9c7ba 100%)"></i><i style="left:1208px;top:586px;width:5px;height:1px;background:#000"></i><i style="left:1210px;top:584px;width:1px;height:5px;background:#000"></i><svg style="left:1229px;top:578px" width="16" height="16" viewBox="0 0 16 16"><rect x="1.500" y="1" width="13" height="13" fill="#fdf7c8" stroke="#8e8e8e"/><path d="M1.500 14h13M14.500 1v13" stroke="#6e6e58" stroke-width="1"/><path d="M3.500 3.500h5" stroke="#4a6fc0" stroke-width="1.300"/><path d="M3.500 6.500h2M3.500 9h2M3.500 11.500h2" stroke="#7a8fc0" stroke-width="1.100"/><path d="M7 6.500h5M7 9h5M7 11.500h5" stroke="#6b6b6b" stroke-width="1.100"/><path d="M6.200 5v8" stroke="#b8b8a0" stroke-width=".6"/></svg><span class="t" style="left:1248px;top:580px;letter-spacing:-0.232px;">TermsUse.aspx</span><i style="left:1211px;top:602px;width:11px;height:1px;background:repeating-linear-gradient(to right,#a8a8a0 0 1px,transparent 1px 2px)"></i><svg style="left:1229px;top:594px" width="17" height="16" viewBox="0 0 17 16"><path d="M1.500 1.500h8l3 3v10h-11z" fill="#fff" stroke="#5a7fc8" stroke-dasharray="1.500 .8"/><path d="M1.500 14.500h11v-10" fill="none" stroke="#3f66b5"/><path d="M3 5h2M3 7.500h2M3 10h2M3 12.500h2" stroke="#3a63c4" stroke-width="1.200"/><path d="M6 5h4M6 7.500h4M6 10h3M6 12.500h3" stroke="#8fa0c8" stroke-width="1.100"/><circle cx="13" cy="9.500" r="3.500" fill="#2f8a6a"/><path d="M10 9c1.500-1.500 4-1 5.500 0" stroke="#7fd0a8" stroke-width="1" fill="none"/><path d="M11.500 3.500c1.500 0 2.500 1 2.500 2.500" stroke="#555" stroke-width="1.200" fill="none"/></svg><span class="t" style="left:1248px;top:596px;letter-spacing:-0.047px;">Web.Config</span><i style="left:1211px;top:618px;width:11px;height:1px;background:repeating-linear-gradient(to right,#a8a8a0 0 1px,transparent 1px 2px)"></i><svg style="left:1229px;top:610px" width="16" height="16" viewBox="0 0 16 16"><rect x=".5" y=".5" width="14" height="14" fill="#f2f6fd" stroke="#8fa0c0"/><rect x="4.500" y="2.500" width="2.500" height="2.500" fill="#2f5fd0"/><rect x="8.500" y="2.500" width="2.500" height="2.500" fill="#2f5fd0"/><path d="M6 5.500l-3.500 5M9.500 5.500l3.500 5M6.500 5l1.500 2 1.500-2M7.800 7v3.500" stroke="#2f5fd0" stroke-width="1.100" fill="none"/><rect x="1.500" y="10.500" width="3" height="3" fill="#fff" stroke="#2f5fd0"/><rect x="6.200" y="10.500" width="3" height="3" fill="#fff" stroke="#2f5fd0"/><rect x="10.800" y="10.500" width="3" height="3" fill="#fff" stroke="#2f5fd0"/></svg><span class="t" style="left:1248px;top:612px;letter-spacing:-0.108px;">Web.sitemap</span><i style="left:1210px;top:161px;width:1px;height:5px;background:repeating-linear-gradient(to bottom,#a8a8a0 0 1px,transparent 1px 2px)"></i><i style="left:1210px;top:175px;width:1px;height:39px;background:repeating-linear-gradient(to bottom,#a8a8a0 0 1px,transparent 1px 2px)"></i><i style="left:1210px;top:223px;width:1px;height:103px;background:repeating-linear-gradient(to bottom,#a8a8a0 0 1px,transparent 1px 2px)"></i><i style="left:1210px;top:335px;width:1px;height:7px;background:repeating-linear-gradient(to bottom,#a8a8a0 0 1px,transparent 1px 2px)"></i><i style="left:1210px;top:351px;width:1px;height:39px;background:repeating-linear-gradient(to bottom,#a8a8a0 0 1px,transparent 1px 2px)"></i><i style="left:1210px;top:399px;width:1px;height:7px;background:repeating-linear-gradient(to bottom,#a8a8a0 0 1px,transparent 1px 2px)"></i><i style="left:1210px;top:415px;width:1px;height:23px;background:repeating-linear-gradient(to bottom,#a8a8a0 0 1px,transparent 1px 2px)"></i><i style="left:1210px;top:447px;width:1px;height:7px;background:repeating-linear-gradient(to bottom,#a8a8a0 0 1px,transparent 1px 2px)"></i><i style="left:1210px;top:463px;width:1px;height:7px;background:repeating-linear-gradient(to bottom,#a8a8a0 0 1px,transparent 1px 2px)"></i><i style="left:1210px;top:479px;width:1px;height:7px;background:repeating-linear-gradient(to bottom,#a8a8a0 0 1px,transparent 1px 2px)"></i><i style="left:1210px;top:495px;width:1px;height:7px;background:repeating-linear-gradient(to bottom,#a8a8a0 0 1px,transparent 1px 2px)"></i><i style="left:1210px;top:511px;width:1px;height:7px;background:repeating-linear-gradient(to bottom,#a8a8a0 0 1px,transparent 1px 2px)"></i><i style="left:1210px;top:527px;width:1px;height:7px;background:repeating-linear-gradient(to bottom,#a8a8a0 0 1px,transparent 1px 2px)"></i><i style="left:1210px;top:543px;width:1px;height:7px;background:repeating-linear-gradient(to bottom,#a8a8a0 0 1px,transparent 1px 2px)"></i><i style="left:1210px;top:559px;width:1px;height:23px;background:repeating-linear-gradient(to bottom,#a8a8a0 0 1px,transparent 1px 2px)"></i><i style="left:1210px;top:591px;width:1px;height:28px;background:repeating-linear-gradient(to bottom,#a8a8a0 0 1px,transparent 1px 2px)"></i><i style="left:1229px;top:178px;width:1px;height:4px;background:repeating-linear-gradient(to bottom,#a8a8a0 0 1px,transparent 1px 2px)"></i><i style="left:1248px;top:194px;width:1px;height:9px;background:repeating-linear-gradient(to bottom,#a8a8a0 0 1px,transparent 1px 2px)"></i><i style="left:1229px;top:226px;width:1px;height:4px;background:repeating-linear-gradient(to bottom,#a8a8a0 0 1px,transparent 1px 2px)"></i><i style="left:1248px;top:242px;width:1px;height:57px;background:repeating-linear-gradient(to bottom,#a8a8a0 0 1px,transparent 1px 2px)"></i><i style="left:1229px;top:354px;width:1px;height:4px;background:repeating-linear-gradient(to bottom,#a8a8a0 0 1px,transparent 1px 2px)"></i><i style="left:1229px;top:367px;width:1px;height:12px;background:repeating-linear-gradient(to bottom,#a8a8a0 0 1px,transparent 1px 2px)"></i><i style="left:1229px;top:418px;width:1px;height:9px;background:repeating-linear-gradient(to bottom,#a8a8a0 0 1px,transparent 1px 2px)"></i><i style="left:1229px;top:562px;width:1px;height:9px;background:repeating-linear-gradient(to bottom,#a8a8a0 0 1px,transparent 1px 2px)"></i><div style="left:1244px;top:401px;width:88px;height:17px;background:#fff;border:1px solid #000"></div><i style="left:1249px;top:403px;width:68px;height:13px;background:#316ac5"></i><span class="t" style="left:1249px;top:404px;color:#fff;letter-spacing:0.057px;">Chatting.aspx</span><div style="left:1199px;top:801px;width:241px;height:17px;background:linear-gradient(to bottom,#f3f1ec,#fefefb)"></div><div style="left:1200px;top:802px;width:15px;height:15px;background:linear-gradient(135deg,#d3defc,#b7cafa);border:1px solid #fff;border-radius:2px;box-shadow:0 0 0 .5px #b4c4f0"></div><svg style="left:1200px;top:802px" width="15" height="15" viewBox="0 0 15 15"><path d="M9 4l-3.500 3.500 3.500 3.500" stroke="#44609a" stroke-width="2" fill="none"/></svg><div style="left:1422px;top:802px;width:15px;height:15px;background:linear-gradient(135deg,#d3defc,#b7cafa);border:1px solid #fff;border-radius:2px;box-shadow:0 0 0 .5px #b4c4f0"></div><svg style="left:1422px;top:802px" width="15" height="15" viewBox="0 0 15 15"><path d="M5.5 4l3.500 3.500-3.500 3.500" stroke="#44609a" stroke-width="2" fill="none"/></svg><div style="left:1216px;top:802px;width:204px;height:15px;background:linear-gradient(to bottom,#c9d8fc,#bfd0fb 60%,#b4c6f7);border:1px solid #fff;border-right-color:#9db0e8;border-bottom-color:#9db0e8;border-radius:2px"></div><i style="left:1314px;top:806px;width:1px;height:6px;background:#eef3ff"></i><i style="left:1315px;top:807px;width:1px;height:6px;background:#8fa4dc"></i><i style="left:1316px;top:806px;width:1px;height:6px;background:#eef3ff"></i><i style="left:1317px;top:807px;width:1px;height:6px;background:#8fa4dc"></i><i style="left:1318px;top:806px;width:1px;height:6px;background:#eef3ff"></i><i style="left:1319px;top:807px;width:1px;height:6px;background:#8fa4dc"></i><i style="left:1320px;top:806px;width:1px;height:6px;background:#eef3ff"></i><i style="left:1321px;top:807px;width:1px;height:6px;background:#8fa4dc"></i><div style="left:1199px;top:818px;width:241px;height:25px;background:#f3f1e6"></div><i style="left:1199px;top:820px;width:241px;height:1px;background:#aca899"></i><div style="left:1199px;top:820px;width:105px;height:22px;background:#fff;border:1px solid #aca899;border-top:0;border-radius:0 0 3px 3px"></div><svg style="left:1201px;top:823px" width="17" height="17" viewBox="0 0 17 17"><rect x="4.500" y=".5" width="11" height="10" fill="#e9f0fc" stroke="#3a5fb0"/><rect x="5" y="1" width="10" height="2" fill="#4f79d6"/><path d="M0.500 4.500h4l1 1h3v5h-8z" fill="#e4c65a" stroke="#9a7d1e"/><circle cx="9.500" cy="9.500" r="3" fill="#d9ecf8" stroke="#7d8aa0" stroke-width="1.200"/><path d="M11.800 11.800l3.700 4" stroke="#5b5e6c" stroke-width="1.800"/></svg><span class="t" style="left:1218px;top:825px;letter-spacing:-0.222px;">Solution Explorer</span><svg style="left:1306px;top:823px" width="17" height="17" viewBox="0 0 17 17"><path d="M1 3h8v8h-8z" fill="#f4e08a" stroke="#9a7d1e"/><path d="M3 5l4 4M7 5l-4 4" stroke="#c8a02a"/><path d="M11 2l3 2.500-3 2.500-3-2.500z" fill="#e060d8" stroke="#9a2a96" stroke-width=".7"/><path d="M12 9l3 2.500-3 2.500-3-2.500z" fill="#4aa8e8" stroke="#1d5f9a" stroke-width=".7"/><path d="M6 11v3h3" stroke="#3a5fb0" fill="none"/></svg><span class="t" style="left:1324px;top:825px;color:#7f7d70;letter-spacing:-0.540px;">Class View</span>
<div style="left:0;top:843px;width:1440px;height:23px;background:#ece9d8;border-top:1px solid #f8f7f1"></div><i style="left:0;top:842px;width:1440px;height:2px;background:linear-gradient(to bottom,#b8b4a2,#dcd9c9)"></i><i style="left:0;top:865px;width:1440px;height:1px;background:#f6f5ee"></i><span class="t" style="left:8px;top:850px;letter-spacing:-0.159px;">Ready</span>
<div style="left:0;top:866px;width:1440px;height:34px;background:linear-gradient(to bottom,#1a50c0 0%,#2b80f2 4%,#2a7cf0 11%,#2366dc 17%,#2259d6 26%,#235ad8 85%,#2a60ee 93%,#1c46ba 100%)"></div><div style="left:0;top:870px;width:97px;height:30px;background:linear-gradient(to bottom,#2f8a2f 0%,#5cb85c 10%,#3f9f3f 25%,#389838 70%,#2f8530 100%);border-radius:0 10px 10px 0 / 0 15px 15px 0;box-shadow:inset -2px 0 3px rgba(0,0,0,.25),inset 0 1px 1px rgba(255,255,255,.35)"></div><svg style="left:9px;top:872px" width="22" height="21" viewBox="0 0 17 16"><path d="M2 3.500c2-1.500 4-1.500 6 0l-1.200 5c-2-1.500-4-1.500-6 0z" fill="#e8502a"/><path d="M9.500 3.800c2 1.400 4 1.400 6-.2l-1.200 5c-2 1.600-4 1.600-6 .2z" fill="#7ac143"/><path d="M.5 10c2-1.500 4-1.500 6 0l-1.200 5c-2-1.500-4-1.500-6 0z" fill="#3a7be0"/><path d="M8 10.300c2 1.400 4 1.400 6-.2l-1.200 5c-2 1.600-4 1.600-6 .2z" fill="#f5c21a"/></svg><span class="t" style="left:35px;top:874.5px;font-size:18px;font-weight:bold;font-style:italic;color:#fff;line-height:22px;height:22px;letter-spacing:-0.203px;text-shadow:1px 1px 1px rgba(0,0,0,.5);">start</span><i style="left:106px;top:874px;width:2px;height:2px;background:#16399a"></i><i style="left:109px;top:876px;width:2px;height:2px;background:#16399a"></i><i style="left:106px;top:879px;width:2px;height:2px;background:#16399a"></i><i style="left:109px;top:881px;width:2px;height:2px;background:#16399a"></i><i style="left:106px;top:884px;width:2px;height:2px;background:#16399a"></i><i style="left:109px;top:886px;width:2px;height:2px;background:#16399a"></i><i style="left:106px;top:889px;width:2px;height:2px;background:#16399a"></i><i style="left:109px;top:891px;width:2px;height:2px;background:#16399a"></i><i style="left:106px;top:894px;width:2px;height:2px;background:#16399a"></i><i style="left:109px;top:896px;width:2px;height:2px;background:#16399a"></i><i style="left:208px;top:874px;width:2px;height:2px;background:#16399a"></i><i style="left:211px;top:876px;width:2px;height:2px;background:#16399a"></i><i style="left:208px;top:879px;width:2px;height:2px;background:#16399a"></i><i style="left:211px;top:881px;width:2px;height:2px;background:#16399a"></i><i style="left:208px;top:884px;width:2px;height:2px;background:#16399a"></i><i style="left:211px;top:886px;width:2px;height:2px;background:#16399a"></i><i style="left:208px;top:889px;width:2px;height:2px;background:#16399a"></i><i style="left:211px;top:891px;width:2px;height:2px;background:#16399a"></i><i style="left:208px;top:894px;width:2px;height:2px;background:#16399a"></i><i style="left:211px;top:896px;width:2px;height:2px;background:#16399a"></i><svg style="left:119px;top:876px" width="18" height="18" viewBox="0 0 16 16"><circle cx="8" cy="8.500" r="6" fill="none" stroke="#3aa2f0" stroke-width="2.600"/><path d="M3 8.500h10" stroke="#3aa2f0" stroke-width="2.200"/><path d="M9 11h5.500v3h-5.500z" fill="#245edb"/><path d="M1 12c-2 4 4 3 9-3s6-9 1-7" stroke="#f2c62a" stroke-width="1.400" fill="none"/></svg><svg style="left:142px;top:876px" width="16" height="16" viewBox="0 0 16 16"><circle cx="8" cy="8" r="7" fill="#fff" stroke="#2a4fa8" stroke-width="1.300"/><rect x="4" y="3.500" width="7" height="9" fill="#e8ecf8" stroke="#2a4fa8"/><path d="M5.500 6h4M5.500 8h4M5.500 10h3" stroke="#2a4fa8"/><path d="M9 9l4-5" stroke="#16399a" stroke-width="1.500"/></svg><svg style="left:165px;top:878px" width="17" height="12" viewBox="0 0 17 12"><rect x=".5" y=".5" width="16" height="11" fill="#f6f6f6" stroke="#d8d8e0"/><path d="M3 6.500h7M3 8.500h6" stroke="#9a9aa8"/><rect x="12" y="2.500" width="2.500" height="3" fill="#8a9ab8"/></svg><span class="t" style="left:192px;top:871px;font-size:13px;color:#dfe8ff;line-height:14px;height:14px;">»</span><div style="left:219px;top:873px;width:99px;height:24px;background:linear-gradient(to bottom,#5a8ef2 0%,#3d7cee 12%,#3875ea 50%,#3270e6 100%);border-radius:3px;border:1px solid #2a5fd0"></div><svg style="left:228px;top:877px" width="16" height="16" viewBox="0 0 16 16"><path d="M.5 3.500c0-1 .5-1.500 1.500-1.500h4l1.500 1.500h7.500v10h-14.500z" fill="#f8d96a" stroke="#b98a1c" stroke-width=".8"/><path d="M.5 13.500l2-7h13l-2 7z" fill="#fdeea0" stroke="#b98a1c" stroke-width=".8"/></svg><span class="t" style="left:247px;top:879px;color:#fff;letter-spacing:0.210px;font-size:11px;">C:\Docu...</span><div style="left:320px;top:873px;width:99px;height:24px;background:linear-gradient(to bottom,#5a8ef2 0%,#3d7cee 12%,#3875ea 50%,#3270e6 100%);border-radius:3px;border:1px solid #2a5fd0"></div><svg style="left:329px;top:877px" width="16" height="16" viewBox="0 0 16 16"><rect x="1" y="0" width="6" height="6" fill="#e8c23a" stroke="#9a7d1e" stroke-width=".7"/><path d="M3 7l10 8M13 7l-9 8" stroke="#d8d8e0" stroke-width="1.700"/><path d="M2 6l3 3" stroke="#888" stroke-width="2"/></svg><span class="t" style="left:348px;top:879px;color:#fff;letter-spacing:0.184px;font-size:11px;">Microsoft...</span><div style="left:421px;top:873px;width:99px;height:24px;background:linear-gradient(to bottom,#5a8ef2 0%,#3d7cee 12%,#3875ea 50%,#3270e6 100%);border-radius:3px;border:1px solid #2a5fd0"></div><svg style="left:430px;top:877px" width="16" height="16" viewBox="0 0 16 16"><circle cx="8" cy="8.500" r="6" fill="none" stroke="#3aa2f0" stroke-width="2.600"/><path d="M3 8.500h10" stroke="#3aa2f0" stroke-width="2.200"/><path d="M9 11h5.500v3h-5.500z" fill="#245edb"/><path d="M1 12c-2 4 4 3 9-3s6-9 1-7" stroke="#f2c62a" stroke-width="1.400" fill="none"/></svg><span class="t" style="left:449px;top:879px;color:#fff;letter-spacing:-0.016px;font-size:11px;">GJ Progr...</span><div style="left:522px;top:873px;width:99px;height:24px;background:linear-gradient(to bottom,#5a8ef2 0%,#3d7cee 12%,#3875ea 50%,#3270e6 100%);border-radius:3px;border:1px solid #2a5fd0"></div><svg style="left:531px;top:877px" width="16" height="16" viewBox="0 0 16 16"><path d="M.5 3.500c0-1 .5-1.500 1.500-1.500h4l1.500 1.500h7.500v10h-14.500z" fill="#f8d96a" stroke="#b98a1c" stroke-width=".8"/><path d="M.5 13.500l2-7h13l-2 7z" fill="#fdeea0" stroke="#b98a1c" stroke-width=".8"/></svg><span class="t" style="left:550px;top:879px;color:#fff;letter-spacing:0.082px;font-size:11px;">C:\SW51...</span><div style="left:623px;top:873px;width:99px;height:24px;background:linear-gradient(to bottom,#5a8ef2 0%,#3d7cee 12%,#3875ea 50%,#3270e6 100%);border-radius:3px;border:1px solid #2a5fd0"></div><svg style="left:632px;top:877px" width="16" height="16" viewBox="0 0 16 16"><circle cx="8" cy="8" r="6.500" fill="#8a3a2a" stroke="#d8d8d8" stroke-width="1.300"/><circle cx="8" cy="8" r="3" fill="#3a7be0"/><path d="M4 5l8 6" stroke="#f2c62a" stroke-width="1.500"/></svg><span class="t" style="left:651px;top:879px;color:#fff;letter-spacing:0.106px;font-size:11px;">SmartFT...</span><div style="left:724px;top:873px;width:99px;height:24px;background:linear-gradient(to bottom,#5a8ef2 0%,#3d7cee 12%,#3875ea 50%,#3270e6 100%);border-radius:3px;border:1px solid #2a5fd0"></div><svg style="left:733px;top:877px" width="16" height="16" viewBox="0 0 16 16"><rect x="1" y="1" width="14" height="14" rx="2" fill="#f4f4f8" stroke="#5a5a8a"/><circle cx="8" cy="8" r="4.500" fill="#6a3ab0"/><path d="M5.500 6l3 2-3 2z" fill="#fff"/></svg><span class="t" style="left:752px;top:879px;color:#fff;letter-spacing:0.184px;font-size:11px;">Microsoft...</span><div style="left:825px;top:873px;width:100px;height:24px;background:linear-gradient(to bottom,#1a46b0 0%,#1f4fc0 20%,#2256c8 100%);border-radius:3px;border:1px solid #16399a"></div><svg style="left:834px;top:877px" width="16" height="16" viewBox="0 0 16 16"><ellipse cx="4.500" cy="8" rx="4" ry="4.500" fill="#e8402a"/><ellipse cx="11.500" cy="8" rx="4" ry="4.500" fill="#f5c21a"/><ellipse cx="8" cy="8" rx="2.800" ry="3.500" fill="#3a7be0"/><path d="M2 9.500c2-5 4-5 6-1.500s4.500 3.500 6.500-1.500" stroke="#fff" stroke-width="1.100" fill="none" opacity=".85"/><path d="M2.500 10.500c2 2 3.500 1 5-1" stroke="#7ac143" stroke-width="1.400" fill="none"/></svg><span class="t" style="left:853px;top:879px;color:#fff;letter-spacing:-0.062px;font-size:11px;">GJ_IMess...</span><div style="left:926px;top:873px;width:99px;height:24px;background:linear-gradient(to bottom,#5a8ef2 0%,#3d7cee 12%,#3875ea 50%,#3270e6 100%);border-radius:3px;border:1px solid #2a5fd0"></div><svg style="left:935px;top:877px" width="16" height="16" viewBox="0 0 16 16"><rect x="5.500" y="1.500" width="10" height="12" fill="#f4f4f8" stroke="#8a8aa0"/><path d="M7 4h7M7 6.500h7M7 9h7M7 11.500h7" stroke="#9a9ab8"/><rect x=".5" y="4.500" width="8" height="10" fill="#dfe3f2" stroke="#6a6a9a"/><path d="M2 7h5M2 9.500h5M2 12h5" stroke="#6a6a9a"/></svg><span class="t" style="left:954px;top:879px;color:#fff;letter-spacing:-0.162px;font-size:11px;">GJ_Mess...</span><div style="left:1029px;top:873px;width:99px;height:24px;background:linear-gradient(to bottom,#5a8ef2 0%,#3d7cee 12%,#3875ea 50%,#3270e6 100%);border-radius:3px;border:1px solid #2a5fd0"></div><svg style="left:1038px;top:877px" width="16" height="16" viewBox="0 0 16 16"><rect x="1.500" y="2.500" width="13" height="11" fill="#fff" stroke="#d8d8e8"/><rect x="2" y="3" width="12" height="2.500" fill="#c8d4f4"/><path d="M2 8h12M2 10.500h12M6 5.500v8M10 5.500v8" stroke="#8fa6d8"/></svg><span class="t" style="left:1057px;top:879px;color:#fff;letter-spacing:0.019px;font-size:11px;">UserTabl...</span><div style="left:1131px;top:873px;width:99px;height:24px;background:linear-gradient(to bottom,#5a8ef2 0%,#3d7cee 12%,#3875ea 50%,#3270e6 100%);border-radius:3px;border:1px solid #2a5fd0"></div><svg style="left:1140px;top:877px" width="16" height="16" viewBox="0 0 16 16"><path d="M4.500 .5h8l3 3v12h-11z" fill="#fff" stroke="#7a8ab0"/><path d="M7 6h7M7 8.500h7M7 11h7M7 13.500h5" stroke="#a8b4d0"/><rect x=".5" y="2.500" width="9" height="9" fill="#2a4fb0" stroke="#e8ecf8"/><path d="M2 4.500l1.300 5 1.700-4 1.700 4 1.300-5" stroke="#fff" stroke-width="1.200" fill="none"/></svg><span class="t" style="left:1159px;top:879px;color:#fff;letter-spacing:0.164px;font-size:11px;">CodeInst...</span><div style="left:1238px;top:873px;width:79px;height:24px;background:linear-gradient(to bottom,#ffe36a 0%,#fbcc2e 40%,#f2b416 100%);border:1px solid #c8921a;border-radius:2px"></div><svg style="left:1241px;top:875px" width="20" height="20" viewBox="0 0 20 20"><defs><radialGradient id="ng" cx=".4" cy=".3" r=".7"><stop offset="0" stop-color="#f8a060"/><stop offset="1" stop-color="#d84a12"/></radialGradient></defs><circle cx="10" cy="10" r="9.300" fill="url(#ng)" stroke="#a83a0a" stroke-width=".8"/><path d="M10 4v8" stroke="#fff" stroke-width="2.600" stroke-linecap="round"/><circle cx="10" cy="15.500" r="1.500" fill="#fff"/></svg><span class="t" style="left:1264px;top:876px;font-size:15px;font-weight:bold;color:#1a1a1a;line-height:18px;height:18px;letter-spacing:-1.192px;">Norton</span><span class="t" style="left:1307px;top:876px;font-size:5px;font-weight:bold;color:#1a1a1a;line-height:7px;height:7px;">TM</span><div style="left:1330px;top:866px;width:110px;height:34px;background:linear-gradient(to bottom,#0f5ccc 0%,#1a8cf0 4%,#1a90f2 11%,#17a0f8 18%,#169ef6 30%,#149af2 85%,#18a4fa 93%,#0f78d4 100%);border-left:1px solid #0a3fa0"></div><div style="left:1320px;top:876px;width:19px;height:19px;border-radius:50%;background:radial-gradient(circle at 35% 30%,#5ab0ff,#1a6ae0 70%,#124fc0);border:1px solid #8fc4ff"></div><svg style="left:1325px;top:881px" width="8" height="9" viewBox="0 0 8 9"><path d="M6 1l-4 3.500 4 3.500" stroke="#fff" stroke-width="2" fill="none"/></svg><svg style="left:1341px;top:877px" width="17" height="17" viewBox="0 0 17 17"><rect x="5.500" y=".5" width="10" height="13" fill="#f8f4c8" stroke="#8a8a6a"/><circle cx="10" cy="6" r="3" fill="#2f8a4a"/><path d="M1 14l4-4 2 2-4 4z" fill="#8a5ab8"/><rect x="6" y="11" width="9" height="2" fill="#6a6a6a"/></svg><svg style="left:1358px;top:877px" width="17" height="17" viewBox="0 0 17 17"><rect x=".5" y=".5" width="9" height="14" fill="#e8e8e8" stroke="#5a5a5a"/><path d="M2 3h6M2 5.500h6M2 8h6" stroke="#5a5a5a"/><circle cx="11.500" cy="11.500" r="5" fill="#fff" stroke="#e8e8e8"/><rect x="9.500" y="9.500" width="4" height="4" fill="#d82020"/></svg><span class="t" style="left:1385px;top:879px;color:#fff;letter-spacing:-0.424px;">1:52 PM</span>
</body></html>
